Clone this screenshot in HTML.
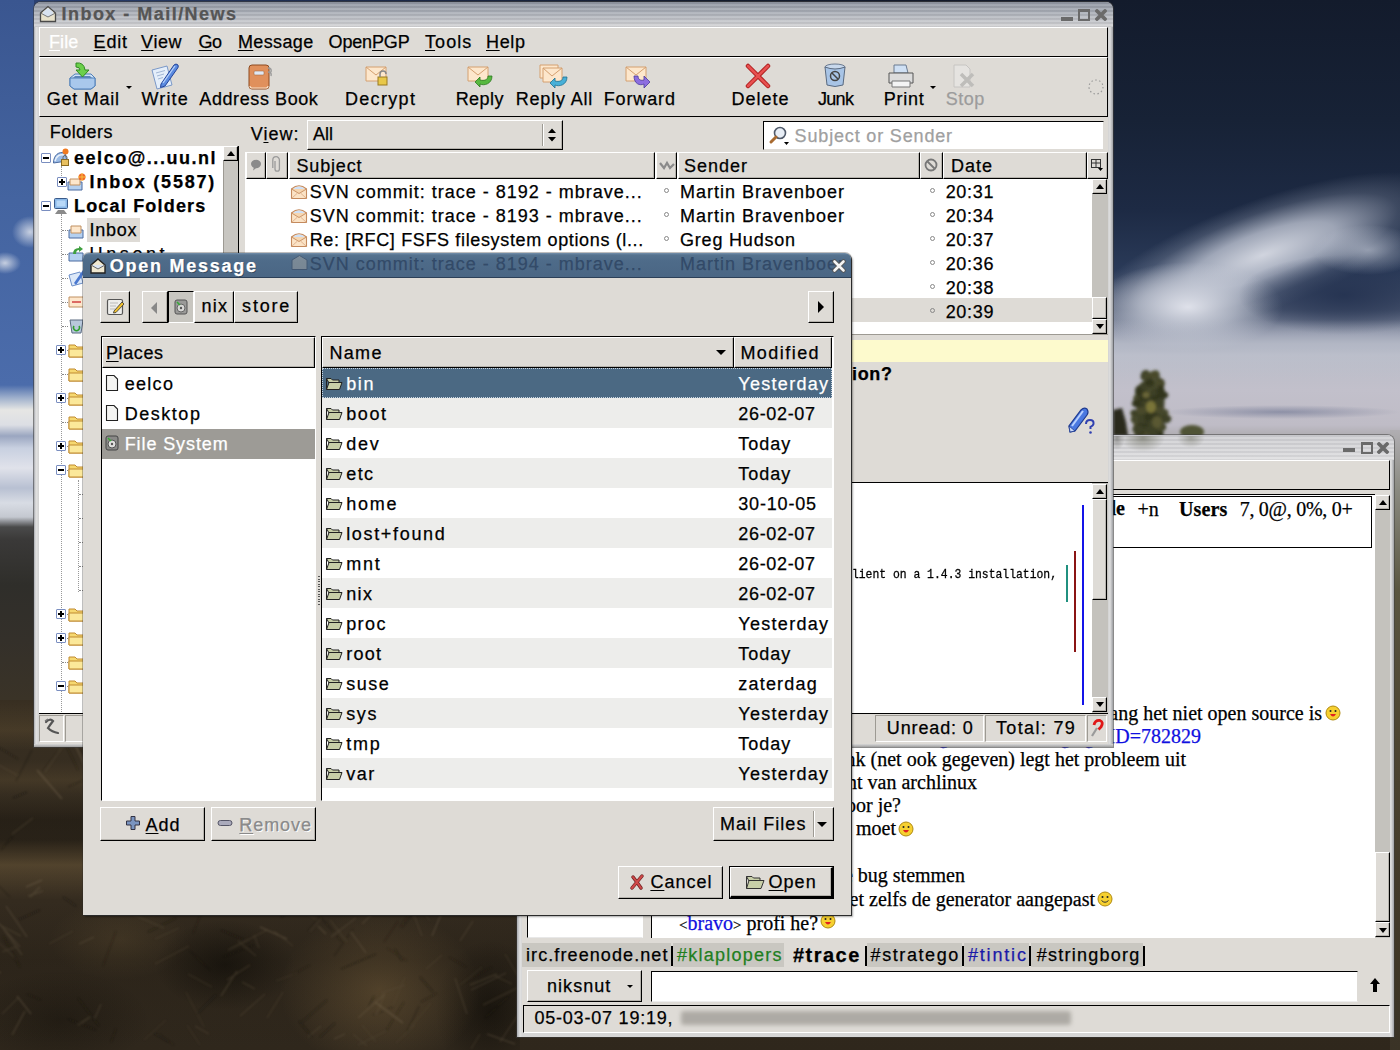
<!DOCTYPE html>
<html><head><meta charset="utf-8">
<style>
*{margin:0;padding:0;box-sizing:border-box}
html,body{width:1400px;height:1050px;overflow:hidden}
body{position:relative;font-family:"Liberation Sans",sans-serif;font-size:18px;letter-spacing:.6px;color:#000;background:#2a2a22}
.a{position:absolute}
.gtk{background:#dedbd6}
.btn{background:#dedbd6;border-top:1px solid #fff;border-left:1px solid #fff;border-right:1px solid #000;border-bottom:1px solid #000;box-shadow:inset -1px -1px 0 #b5b2ac}
.sunk{border-top:1px solid #000;border-left:1px solid #000;border-right:1px solid #fff;border-bottom:1px solid #fff}
.t{position:absolute;white-space:nowrap;line-height:20px;-webkit-text-stroke:0.25px currentColor}
.b{font-weight:bold}
.u{text-decoration:underline;text-underline-offset:2px;text-decoration-thickness:1px}
.title{background:repeating-linear-gradient(180deg,rgba(0,0,0,.05) 0px,rgba(0,0,0,.05) 2px,rgba(255,255,255,.1) 2px,rgba(255,255,255,.1) 4px),linear-gradient(180deg,#9096a2 0,#a6abb4 35%,#c0c2c8 70%,#d4d4d6 100%)}
.sr{font-family:"Liberation Serif",serif;font-size:18px;letter-spacing:0}
</style></head><body>
<!-- BACKGROUND -->
<div class="a" style="left:0;top:0;width:1400px;height:1050px;background:linear-gradient(180deg,#1a2438 0px,#1a2438 440px,#3e3a2c 470px,#3a3327 560px,#372e21 700px,#342b1f 900px,#2f271c 1050px)"></div>
<div class="a" style="left:0;top:0;width:1400px;height:8px;background:linear-gradient(90deg,#2c4478 0,#22335a 200px,#141c2e 700px,#111827 1400px)"></div>
<div class="a" style="left:1113px;top:0;width:287px;height:440px;overflow:hidden;background:linear-gradient(180deg,#131b2c 0px,#172236 120px,#1d2a44 210px,#2a3a58 270px,#4a5670 310px,#8d94a8 335px,#b9bcc8 355px,#c2c0cb 390px,#bfbcc6 425px,#a8a6a8 440px)">
 <div class="a" style="left:-40px;top:200px;width:380px;height:110px;transform:rotate(-20deg);background:radial-gradient(ellipse 50% 50% at 50% 50%,rgba(218,221,230,.95) 0%,rgba(200,205,218,.75) 40%,rgba(160,168,185,.25) 75%,rgba(150,160,180,0) 100%)"></div>
 <div class="a" style="left:-20px;top:262px;width:190px;height:90px;background:radial-gradient(ellipse 50% 50% at 50% 50%,rgba(228,230,238,.95) 0%,rgba(205,209,220,.65) 50%,rgba(180,186,200,0) 100%)"></div>
 <div class="a" style="left:115px;top:255px;width:210px;height:80px;background:radial-gradient(ellipse 50% 50% at 55% 50%,rgba(36,50,80,.9) 0%,rgba(36,50,80,.5) 50%,rgba(36,50,80,0) 100%)"></div>
 <div class="a" style="left:200px;top:225px;width:110px;height:50px;background:radial-gradient(ellipse 50% 50% at 50% 50%,rgba(205,210,222,.6) 0%,rgba(205,210,222,0) 100%)"></div>
 <div class="a" style="left:0px;top:320px;width:287px;height:60px;background:linear-gradient(180deg,rgba(190,194,206,0),rgba(190,194,206,.6) 40%,rgba(190,194,206,0))"></div>
 <svg class="a" style="left:0px;top:360px" width="120" height="80" viewBox="0 0 120 80"><defs><filter id="bl" x="-30%" y="-30%" width="160%" height="160%"><feGaussianBlur stdDeviation="1.6"/></filter></defs><g filter="url(#bl)"><path d="M22 30 Q37 8 52 30 L50 76 L26 76Z" fill="#3e4026"/><ellipse cx="45.1" cy="52.6" rx="5.4" ry="4.9" fill="#3c3f25"/><ellipse cx="45.5" cy="66.1" rx="3.7" ry="3.1" fill="#45472a"/><ellipse cx="36.4" cy="21.0" rx="3.7" ry="4.1" fill="#45472a"/><ellipse cx="33.4" cy="14.8" rx="3.8" ry="4.8" fill="#4a4a2c"/><ellipse cx="43.4" cy="23.9" rx="3.4" ry="4.2" fill="#45472a"/><ellipse cx="46.4" cy="22.2" rx="3.0" ry="4.5" fill="#45472a"/><ellipse cx="30.6" cy="68.1" rx="5.9" ry="4.1" fill="#45472a"/><ellipse cx="47.7" cy="25.3" rx="3.6" ry="4.9" fill="#4a4a2c"/><ellipse cx="32.8" cy="32.5" rx="3.5" ry="3.3" fill="#3c3f25"/><ellipse cx="47.1" cy="34.6" rx="4.8" ry="4.2" fill="#33361f"/><ellipse cx="34.7" cy="18.1" rx="3.9" ry="4.4" fill="#45472a"/><ellipse cx="44.2" cy="43.8" rx="3.2" ry="5.0" fill="#3c3f25"/><ellipse cx="32.8" cy="72.9" rx="4.2" ry="4.1" fill="#4a4a2c"/><ellipse cx="39.7" cy="36.7" rx="3.0" ry="3.1" fill="#45472a"/><ellipse cx="52.1" cy="52.7" rx="3.4" ry="3.5" fill="#4a4a2c"/><ellipse cx="32.3" cy="35.4" rx="4.6" ry="4.6" fill="#3c3f25"/><ellipse cx="46.5" cy="50.6" rx="4.1" ry="3.6" fill="#4a4a2c"/><ellipse cx="25.0" cy="72.6" rx="4.0" ry="4.2" fill="#45472a"/><ellipse cx="50.7" cy="35.1" rx="4.6" ry="3.6" fill="#33361f"/><ellipse cx="46.1" cy="33.0" rx="4.9" ry="4.4" fill="#33361f"/><ellipse cx="27.2" cy="75.8" rx="3.1" ry="5.0" fill="#4a4a2c"/><ellipse cx="40.3" cy="16.0" rx="4.0" ry="3.5" fill="#4a4a2c"/><ellipse cx="46.9" cy="23.0" rx="4.9" ry="4.6" fill="#33361f"/><ellipse cx="25.6" cy="66.0" rx="5.2" ry="4.9" fill="#4a4a2c"/><ellipse cx="35.8" cy="20.6" rx="3.4" ry="4.7" fill="#33361f"/><ellipse cx="45.6" cy="22.8" rx="4.9" ry="3.3" fill="#4a4a2c"/><ellipse cx="42.5" cy="73.5" rx="4.0" ry="3.5" fill="#4a4a2c"/><ellipse cx="24.3" cy="39.0" rx="4.1" ry="5.0" fill="#45472a"/><ellipse cx="37.0" cy="52.9" rx="4.0" ry="3.2" fill="#33361f"/><ellipse cx="38.7" cy="45.9" rx="4.5" ry="3.1" fill="#33361f"/><ellipse cx="42.3" cy="57.1" rx="5.3" ry="3.7" fill="#33361f"/><ellipse cx="29.8" cy="65.8" rx="5.9" ry="4.4" fill="#33361f"/><ellipse cx="39.7" cy="54.3" rx="3.0" ry="4.1" fill="#33361f"/><ellipse cx="29.9" cy="34.2" rx="3.9" ry="4.0" fill="#33361f"/><ellipse cx="41.7" cy="35.6" rx="5.2" ry="4.7" fill="#33361f"/><ellipse cx="27.3" cy="71.2" rx="5.6" ry="3.9" fill="#33361f"/><ellipse cx="37.5" cy="73.3" rx="4.6" ry="3.3" fill="#33361f"/><ellipse cx="36.3" cy="72.1" rx="5.1" ry="4.4" fill="#4a4a2c"/><ellipse cx="43.3" cy="24.7" rx="4.7" ry="4.3" fill="#4a4a2c"/><ellipse cx="38.6" cy="32.8" rx="5.6" ry="3.5" fill="#3c3f25"/><ellipse cx="39.1" cy="26.1" rx="4.9" ry="3.4" fill="#45472a"/><ellipse cx="21.8" cy="53.1" rx="4.4" ry="3.5" fill="#3c3f25"/><ellipse cx="25.3" cy="69.3" rx="5.9" ry="4.0" fill="#3c3f25"/><ellipse cx="31.7" cy="39.8" rx="5.0" ry="3.1" fill="#45472a"/><ellipse cx="47.6" cy="28.7" rx="3.0" ry="3.8" fill="#33361f"/><ellipse cx="48.2" cy="67.1" rx="5.1" ry="4.1" fill="#3c3f25"/><ellipse cx="30.2" cy="48.1" rx="3.9" ry="4.0" fill="#33361f"/><ellipse cx="46.3" cy="73.4" rx="4.3" ry="4.6" fill="#33361f"/><ellipse cx="24.9" cy="43.0" rx="4.1" ry="4.0" fill="#45472a"/><ellipse cx="40.2" cy="74.0" rx="4.1" ry="4.8" fill="#3c3f25"/><ellipse cx="30.9" cy="37.7" rx="5.7" ry="4.1" fill="#33361f"/><ellipse cx="50.0" cy="53.0" rx="4.1" ry="3.9" fill="#45472a"/><ellipse cx="36.3" cy="44.6" rx="5.1" ry="3.8" fill="#45472a"/><ellipse cx="28.9" cy="50.9" rx="5.9" ry="4.0" fill="#4a4a2c"/><ellipse cx="42.9" cy="15.2" rx="3.9" ry="4.9" fill="#45472a"/><ellipse cx="23.7" cy="43.6" rx="4.9" ry="3.9" fill="#33361f"/><ellipse cx="31.8" cy="16.5" rx="4.2" ry="4.0" fill="#33361f"/><ellipse cx="36.3" cy="29.1" rx="3.1" ry="4.0" fill="#45472a"/><ellipse cx="30.1" cy="58.7" rx="4.5" ry="5.0" fill="#3c3f25"/><ellipse cx="32.1" cy="15.0" rx="3.8" ry="4.4" fill="#33361f"/><ellipse cx="21.8" cy="59.3" rx="4.0" ry="4.4" fill="#45472a"/><ellipse cx="33.5" cy="16.3" rx="4.4" ry="4.8" fill="#45472a"/><ellipse cx="40.6" cy="14.9" rx="4.3" ry="4.2" fill="#4a4a2c"/><ellipse cx="47.4" cy="67.2" rx="4.4" ry="4.4" fill="#45472a"/><ellipse cx="36.0" cy="69.7" rx="5.3" ry="3.6" fill="#3c3f25"/><ellipse cx="34.8" cy="57.1" rx="3.9" ry="4.6" fill="#33361f"/><ellipse cx="36.6" cy="22.8" rx="4.6" ry="4.0" fill="#33361f"/><ellipse cx="34.4" cy="47.4" rx="4.6" ry="3.1" fill="#45472a"/><ellipse cx="25.4" cy="30.6" rx="3.2" ry="4.9" fill="#33361f"/><ellipse cx="52.4" cy="58.8" rx="6.0" ry="4.4" fill="#3c3f25"/><ellipse cx="38" cy="47" rx="5" ry="6" fill="#7a7438"/><ellipse cx="33" cy="35" rx="3.5" ry="3" fill="#6a6638"/><ellipse cx="44" cy="62" rx="5" ry="6" fill="#5a5830"/><ellipse cx="79" cy="72" rx="12" ry="7" fill="#505234"/><path d="M0 50 L9 48 L13 62 L15 76 L0 76Z" fill="#2a2c1e"/></g></svg>
 <div class="a" style="left:50px;top:405px;width:237px;height:14px;background:radial-gradient(ellipse 50% 50% at 50% 50%,rgba(80,90,125,.45) 0%,rgba(80,90,125,0) 100%)"></div>
</div>
<div class="a" style="left:0;top:0;width:34px;height:700px;background:linear-gradient(180deg,#3a5690 0px,#4464a0 200px,#4b6cab 385px,#9fb0cc 398px,#e6e6e4 410px,#dcdee4 425px,#9aa6c0 436px,#c8d0e0 448px,#e0e2ea 468px,#b8c0d2 488px,#d8dce4 503px,#c4c8d0 517px,#4a4a4a 527px,#3a3938 540px,#2f2e2a 585px,#34302a 640px,#3a3327 700px)"></div>
<div class="a" style="left:0;top:215px;width:34px;height:70px;background:radial-gradient(ellipse 18px 16px at 30px 17px,rgba(220,225,235,.85),rgba(220,225,235,0)),radial-gradient(ellipse 16px 11px at 5px 48px,rgba(220,225,235,.85),rgba(220,225,235,0))"></div>
<div class="a" style="left:0;top:700px;width:520px;height:350px;background:
 linear-gradient(180deg,rgba(0,0,0,0) 0px,rgba(100,82,52,.35) 30px,rgba(0,0,0,0) 50px,rgba(0,0,0,0) 60px,rgba(100,82,52,.3) 80px,rgba(0,0,0,0) 95px,rgba(12,10,6,.35) 120px,rgba(12,10,6,.3) 140px,rgba(110,90,58,.5) 165px,rgba(0,0,0,0) 200px,rgba(12,10,6,.15) 260px,rgba(0,0,0,0) 350px),
 radial-gradient(ellipse 100px 80px at 380px 290px,rgba(120,96,60,.55),rgba(120,96,60,0)),
 radial-gradient(ellipse 70px 45px at 225px 265px,rgba(12,10,6,.6),rgba(12,10,6,0)),
 radial-gradient(ellipse 55px 70px at 490px 310px,rgba(12,10,6,.6),rgba(12,10,6,0)),
 radial-gradient(ellipse 90px 50px at 60px 320px,rgba(12,10,6,.35),rgba(12,10,6,0)),
 radial-gradient(ellipse 70px 40px at 120px 240px,rgba(100,82,52,.35),rgba(100,82,52,0))"></div>
<svg class="a" style="left:0;top:740px" width="520" height="310" viewBox="0 0 520 310" opacity=".45"><defs><filter id="gb"><feGaussianBlur stdDeviation="0.9"/></filter></defs><g filter="url(#gb)">
<path d="M168 47 L144 36" stroke="#807058" stroke-width="1.2"/>
<path d="M30 157 L40 147" stroke="#6e6048" stroke-width="1.2"/>
<path d="M221 256 L237 231" stroke="#6e6048" stroke-width="1.2"/>
<path d="M304 15 L317 5" stroke="#1a1710" stroke-width="0.8"/>
<path d="M281 177 L294 169" stroke="#151410" stroke-width="1.2"/>
<path d="M98 30 L78 8" stroke="#1a1710" stroke-width="1.2"/>
<path d="M276 241 L297 233" stroke="#5a4e3a" stroke-width="0.8"/>
<path d="M363 76 L391 51" stroke="#1a1710" stroke-width="1"/>
<path d="M317 23 L327 4" stroke="#1a1710" stroke-width="1"/>
<path d="M20 207 L-4 180" stroke="#807058" stroke-width="1"/>
<path d="M362 184 L387 159" stroke="#807058" stroke-width="1"/>
<path d="M362 20 L340 4" stroke="#1a1710" stroke-width="1"/>
<path d="M373 275 L393 267" stroke="#151410" stroke-width="0.8"/>
<path d="M257 68 L277 56" stroke="#1a1710" stroke-width="0.8"/>
<path d="M87 125 L98 103" stroke="#151410" stroke-width="1"/>
<path d="M367 306 L353 294" stroke="#6e6048" stroke-width="0.8"/>
<path d="M79 204 L94 197" stroke="#807058" stroke-width="0.8"/>
<path d="M76 166 L63 157" stroke="#151410" stroke-width="1.2"/>
<path d="M341 229 L376 214" stroke="#151410" stroke-width="1"/>
<path d="M207 122 L219 109" stroke="#5a4e3a" stroke-width="1"/>
<path d="M84 105 L90 90" stroke="#6e6048" stroke-width="1"/>
<path d="M319 22 L339 -1" stroke="#807058" stroke-width="1.2"/>
<path d="M189 38 L181 14" stroke="#1a1710" stroke-width="1"/>
<path d="M45 32 L65 3" stroke="#5a4e3a" stroke-width="1.2"/>
<path d="M12 295 L25 271" stroke="#6e6048" stroke-width="1.2"/>
<path d="M155 199 L179 188" stroke="#5a4e3a" stroke-width="1"/>
<path d="M401 165 L387 154" stroke="#5a4e3a" stroke-width="0.8"/>
<path d="M426 229 L442 215" stroke="#6e6048" stroke-width="0.8"/>
<path d="M411 146 L428 133" stroke="#807058" stroke-width="1"/>
<path d="M42 32 L58 12" stroke="#151410" stroke-width="0.8"/>
<path d="M249 202 L221 190" stroke="#1a1710" stroke-width="1.2"/>
<path d="M390 148 L409 138" stroke="#1a1710" stroke-width="1"/>
<path d="M209 294 L195 286" stroke="#5a4e3a" stroke-width="1.2"/>
<path d="M471 250 L506 233" stroke="#807058" stroke-width="0.8"/>
<path d="M285 41 L314 31" stroke="#151410" stroke-width="1.2"/>
<path d="M485 134 L477 119" stroke="#807058" stroke-width="0.8"/>
<path d="M152 75 L166 55" stroke="#5a4e3a" stroke-width="0.8"/>
<path d="M473 110 L502 86" stroke="#1a1710" stroke-width="1.2"/>
<path d="M68 47 L99 33" stroke="#151410" stroke-width="0.8"/>
<path d="M404 46 L416 37" stroke="#6e6048" stroke-width="1"/>
<path d="M355 165 L387 147" stroke="#6e6048" stroke-width="0.8"/>
<path d="M99 13 L108 4" stroke="#6e6048" stroke-width="1"/>
<path d="M169 302 L152 292" stroke="#151410" stroke-width="1.2"/>
<path d="M420 157 L447 133" stroke="#807058" stroke-width="1.2"/>
<path d="M464 63 L480 46" stroke="#807058" stroke-width="0.8"/>
<path d="M349 133 L358 120" stroke="#5a4e3a" stroke-width="1.2"/>
<path d="M335 114 L347 91" stroke="#6e6048" stroke-width="1"/>
<path d="M460 50 L433 34" stroke="#151410" stroke-width="1"/>
<path d="M176 61 L187 54" stroke="#151410" stroke-width="1"/>
<path d="M229 6 L250 -10" stroke="#6e6048" stroke-width="0.8"/>
<path d="M512 244 L495 236" stroke="#6e6048" stroke-width="0.8"/>
<path d="M141 40 L173 27" stroke="#807058" stroke-width="1"/>
<path d="M78 285 L90 277" stroke="#6e6048" stroke-width="1.2"/>
<path d="M95 278 L101 264" stroke="#807058" stroke-width="0.8"/>
<path d="M316 69 L322 58" stroke="#151410" stroke-width="1"/>
<path d="M482 83 L496 71" stroke="#6e6048" stroke-width="0.8"/>
<path d="M136 56 L120 35" stroke="#5a4e3a" stroke-width="1"/>
<path d="M232 208 L267 190" stroke="#6e6048" stroke-width="0.8"/>
<path d="M10 157 L-4 143" stroke="#1a1710" stroke-width="0.8"/>
<path d="M342 202 L318 174" stroke="#151410" stroke-width="1"/>
<path d="M358 305 L386 291" stroke="#5a4e3a" stroke-width="1"/>
<path d="M515 304 L487 294" stroke="#807058" stroke-width="1"/>
<path d="M85 26 L72 -2" stroke="#807058" stroke-width="1.2"/>
<path d="M126 91 L138 70" stroke="#807058" stroke-width="1"/>
<path d="M500 302 L522 269" stroke="#807058" stroke-width="0.8"/>
<path d="M185 0 L204 -18" stroke="#5a4e3a" stroke-width="0.8"/>
<path d="M262 2 L273 -19" stroke="#6e6048" stroke-width="1"/>
<path d="M12 94 L33 78" stroke="#5a4e3a" stroke-width="1.2"/>
<path d="M464 243 L492 227" stroke="#1a1710" stroke-width="0.8"/>
<path d="M148 192 L176 178" stroke="#151410" stroke-width="1.2"/>
<path d="M223 217 L254 205" stroke="#151410" stroke-width="0.8"/>
<path d="M430 181 L412 155" stroke="#5a4e3a" stroke-width="0.8"/>
<path d="M16 41 L32 10" stroke="#151410" stroke-width="0.8"/>
<path d="M326 194 L318 186" stroke="#6e6048" stroke-width="1.2"/>
<path d="M485 278 L509 256" stroke="#1a1710" stroke-width="1"/>
<path d="M421 262 L437 253" stroke="#1a1710" stroke-width="1"/>
<path d="M440 24 L429 16" stroke="#5a4e3a" stroke-width="0.8"/>
<path d="M312 103 L295 79" stroke="#5a4e3a" stroke-width="0.8"/>
<path d="M251 151 L234 143" stroke="#1a1710" stroke-width="1"/>
<path d="M369 89 L403 69" stroke="#151410" stroke-width="0.8"/>
<path d="M162 27 L170 15" stroke="#151410" stroke-width="1"/>
<path d="M517 120 L511 107" stroke="#6e6048" stroke-width="0.8"/>
<path d="M389 81 L412 63" stroke="#807058" stroke-width="0.8"/>
<path d="M366 72 L357 63" stroke="#6e6048" stroke-width="1"/>
<path d="M354 126 L337 111" stroke="#6e6048" stroke-width="1"/>
<path d="M1 233 L-33 216" stroke="#6e6048" stroke-width="1.2"/>
<path d="M151 115 L178 107" stroke="#807058" stroke-width="1"/>
<path d="M393 265 L405 237" stroke="#5a4e3a" stroke-width="0.8"/>
<path d="M505 135 L535 119" stroke="#1a1710" stroke-width="0.8"/>
<path d="M422 196 L412 170" stroke="#6e6048" stroke-width="0.8"/>
<path d="M485 127 L453 111" stroke="#1a1710" stroke-width="0.8"/>
<path d="M474 171 L488 156" stroke="#807058" stroke-width="1.2"/>
<path d="M384 202 L398 181" stroke="#1a1710" stroke-width="0.8"/>
<path d="M87 50 L111 40" stroke="#5a4e3a" stroke-width="1"/>
<path d="M471 309 L480 294" stroke="#6e6048" stroke-width="0.8"/>
<path d="M178 28 L194 5" stroke="#6e6048" stroke-width="1.2"/>
<path d="M453 119 L436 109" stroke="#6e6048" stroke-width="1"/>
<path d="M144 300 L166 280" stroke="#5a4e3a" stroke-width="0.8"/>
<path d="M141 77 L168 49" stroke="#6e6048" stroke-width="0.8"/>
<path d="M17 220 L-4 200" stroke="#6e6048" stroke-width="0.8"/>
<path d="M204 287 L186 252" stroke="#5a4e3a" stroke-width="0.8"/>
<path d="M116 47 L85 32" stroke="#1a1710" stroke-width="0.8"/>
<path d="M287 12 L255 -8" stroke="#807058" stroke-width="0.8"/>
<path d="M326 164 L339 157" stroke="#807058" stroke-width="1.2"/>
<path d="M491 59 L501 54" stroke="#151410" stroke-width="1"/>
<path d="M518 86 L535 78" stroke="#151410" stroke-width="0.8"/>
<path d="M284 9 L296 1" stroke="#5a4e3a" stroke-width="1"/>
<path d="M460 201 L473 181" stroke="#807058" stroke-width="0.8"/>
<path d="M256 216 L238 201" stroke="#6e6048" stroke-width="1"/>
<path d="M384 157 L404 150" stroke="#5a4e3a" stroke-width="0.8"/>
<path d="M242 82 L215 70" stroke="#151410" stroke-width="0.8"/>
<path d="M466 150 L440 139" stroke="#1a1710" stroke-width="0.8"/>
<path d="M111 302 L116 289" stroke="#1a1710" stroke-width="1"/>
<path d="M467 274 L455 238" stroke="#807058" stroke-width="0.8"/>
<path d="M96 290 L68 279" stroke="#1a1710" stroke-width="1"/>
<path d="M512 137 L518 124" stroke="#1a1710" stroke-width="0.8"/>
<path d="M292 235 L310 225" stroke="#1a1710" stroke-width="0.8"/>
<path d="M26 147 L42 140" stroke="#807058" stroke-width="1.2"/>
<path d="M466 9 L496 -6" stroke="#6e6048" stroke-width="1"/>
<path d="M18 19 L-10 2" stroke="#151410" stroke-width="1"/>
<path d="M189 104 L158 92" stroke="#807058" stroke-width="1"/>
<path d="M155 224 L189 206" stroke="#6e6048" stroke-width="0.8"/>
<path d="M430 33 L405 10" stroke="#807058" stroke-width="1"/>
<path d="M424 41 L438 6" stroke="#807058" stroke-width="1.2"/>
<path d="M402 188 L415 171" stroke="#151410" stroke-width="0.8"/>
<path d="M266 121 L286 99" stroke="#1a1710" stroke-width="1.2"/>
<path d="M283 50 L289 37" stroke="#151410" stroke-width="0.8"/>
<path d="M108 131 L102 115" stroke="#5a4e3a" stroke-width="1"/>
<path d="M240 276 L265 254" stroke="#6e6048" stroke-width="1"/>
<path d="M153 176 L168 167" stroke="#5a4e3a" stroke-width="0.8"/>
<path d="M128 48 L114 31" stroke="#1a1710" stroke-width="1"/>
<path d="M516 157 L543 143" stroke="#6e6048" stroke-width="0.8"/>
<path d="M2 274 L18 258" stroke="#807058" stroke-width="0.8"/>
<path d="M62 59 L37 30" stroke="#807058" stroke-width="1.2"/>
<path d="M450 139 L484 121" stroke="#6e6048" stroke-width="1.2"/>
<path d="M310 192 L320 180" stroke="#5a4e3a" stroke-width="1"/>
<path d="M20 227 L3 196" stroke="#1a1710" stroke-width="1.2"/>
<path d="M193 193 L203 169" stroke="#1a1710" stroke-width="0.8"/>
<path d="M212 247 L188 234" stroke="#5a4e3a" stroke-width="1"/>
<path d="M362 127 L385 96" stroke="#807058" stroke-width="1.2"/>
<path d="M295 111 L331 94" stroke="#807058" stroke-width="1.2"/>
<path d="M103 226 L116 191" stroke="#1a1710" stroke-width="0.8"/>
<path d="M427 126 L415 115" stroke="#6e6048" stroke-width="0.8"/>
<path d="M287 199 L260 187" stroke="#807058" stroke-width="1.2"/>
<path d="M262 45 L291 20" stroke="#6e6048" stroke-width="1"/>
<path d="M255 249 L242 242" stroke="#6e6048" stroke-width="1"/>
<path d="M164 188 L134 175" stroke="#5a4e3a" stroke-width="1.2"/>
<path d="M409 69 L441 54" stroke="#5a4e3a" stroke-width="1.2"/>
<path d="M113 124 L124 112" stroke="#5a4e3a" stroke-width="1.2"/>
<path d="M424 60 L410 32" stroke="#807058" stroke-width="0.8"/>
<path d="M203 141 L187 115" stroke="#807058" stroke-width="1.2"/>
<path d="M130 121 L142 109" stroke="#6e6048" stroke-width="1.2"/>
<path d="M513 144 L541 123" stroke="#5a4e3a" stroke-width="1"/>
<path d="M208 21 L230 -6" stroke="#151410" stroke-width="1.2"/>
<path d="M342 13 L361 5" stroke="#151410" stroke-width="0.8"/>
<path d="M28 156 L43 151" stroke="#6e6048" stroke-width="1.2"/>
<path d="M381 253 L405 245" stroke="#5a4e3a" stroke-width="1.2"/>
<path d="M410 288 L431 263" stroke="#5a4e3a" stroke-width="1"/>
<path d="M466 85 L443 73" stroke="#1a1710" stroke-width="0.8"/>
<path d="M308 191 L319 178" stroke="#1a1710" stroke-width="0.8"/>
<path d="M331 86 L353 60" stroke="#807058" stroke-width="0.8"/>
<path d="M399 15 L391 -8" stroke="#151410" stroke-width="1.2"/>
<path d="M358 278 L385 254" stroke="#807058" stroke-width="1"/>
<path d="M195 114 L204 103" stroke="#5a4e3a" stroke-width="0.8"/>
<path d="M320 297 L335 283" stroke="#151410" stroke-width="1.2"/>
<path d="M466 227 L449 217" stroke="#1a1710" stroke-width="1"/>
<path d="M267 278 L283 252" stroke="#6e6048" stroke-width="0.8"/>
<path d="M1 110 L13 96" stroke="#151410" stroke-width="1"/>
<path d="M306 63 L295 52" stroke="#5a4e3a" stroke-width="1.2"/>
<path d="M78 30 L63 -1" stroke="#1a1710" stroke-width="1"/>
<path d="M503 17 L491 -9" stroke="#151410" stroke-width="1"/>
<path d="M313 160 L319 150" stroke="#6e6048" stroke-width="1.2"/>
<path d="M13 58 L27 52" stroke="#151410" stroke-width="1.2"/>
<path d="M342 61 L364 41" stroke="#1a1710" stroke-width="1.2"/>
<path d="M91 96 L106 62" stroke="#1a1710" stroke-width="1.2"/>
<path d="M280 116 L293 111" stroke="#1a1710" stroke-width="0.8"/>
<path d="M117 33 L126 13" stroke="#807058" stroke-width="1.2"/>
<path d="M27 197 L6 166" stroke="#807058" stroke-width="1"/>
<path d="M334 299 L345 294" stroke="#807058" stroke-width="0.8"/>
<path d="M438 63 L454 56" stroke="#1a1710" stroke-width="1"/>
<path d="M313 118 L297 81" stroke="#151410" stroke-width="1"/>
<path d="M246 164 L260 129" stroke="#5a4e3a" stroke-width="1.2"/>
<path d="M460 245 L482 227" stroke="#5a4e3a" stroke-width="0.8"/>
<path d="M17 35 L-18 16" stroke="#6e6048" stroke-width="0.8"/>
<path d="M22 215 L3 188" stroke="#6e6048" stroke-width="1.2"/>
<path d="M396 62 L375 39" stroke="#1a1710" stroke-width="0.8"/>
<path d="M128 63 L164 50" stroke="#6e6048" stroke-width="1.2"/>
<path d="M329 148 L355 134" stroke="#807058" stroke-width="1"/>
<path d="M175 81 L187 76" stroke="#807058" stroke-width="1"/>
<path d="M400 187 L419 160" stroke="#1a1710" stroke-width="0.8"/>
<path d="M227 240 L250 225" stroke="#5a4e3a" stroke-width="1.2"/>
<path d="M448 28 L438 22" stroke="#5a4e3a" stroke-width="1"/>
<path d="M396 303 L415 285" stroke="#5a4e3a" stroke-width="1"/>
<path d="M308 297 L321 286" stroke="#5a4e3a" stroke-width="1.2"/>
<path d="M120 51 L107 29" stroke="#151410" stroke-width="0.8"/>
<path d="M327 110 L351 83" stroke="#6e6048" stroke-width="1"/>
<path d="M462 8 L483 -23" stroke="#151410" stroke-width="0.8"/>
<path d="M197 274 L216 255" stroke="#151410" stroke-width="1.2"/>
<path d="M18 180 L40 170" stroke="#151410" stroke-width="1.2"/>
<path d="M168 144 L153 134" stroke="#807058" stroke-width="1"/>
<path d="M334 216 L353 189" stroke="#151410" stroke-width="0.8"/>
<path d="M376 302 L362 285" stroke="#5a4e3a" stroke-width="1"/>
<path d="M497 80 L492 65" stroke="#6e6048" stroke-width="0.8"/>
<path d="M200 305 L187 285" stroke="#5a4e3a" stroke-width="0.8"/>
<path d="M332 33 L340 23" stroke="#1a1710" stroke-width="1"/>
<path d="M361 155 L349 144" stroke="#151410" stroke-width="1.2"/>
<path d="M210 230 L190 211" stroke="#1a1710" stroke-width="0.8"/>
<path d="M347 202 L330 180" stroke="#5a4e3a" stroke-width="1.2"/>
<path d="M94 39 L112 12" stroke="#1a1710" stroke-width="0.8"/>
<path d="M407 221 L387 208" stroke="#1a1710" stroke-width="0.8"/>
<path d="M323 127 L317 111" stroke="#807058" stroke-width="0.8"/>
<path d="M202 152 L177 142" stroke="#5a4e3a" stroke-width="1.2"/>
<path d="M407 292 L419 266" stroke="#151410" stroke-width="0.8"/>
<path d="M373 159 L361 135" stroke="#1a1710" stroke-width="1.2"/>
<path d="M493 65 L467 44" stroke="#6e6048" stroke-width="1.2"/>
<path d="M512 110 L525 91" stroke="#6e6048" stroke-width="0.8"/>
<path d="M218 130 L202 118" stroke="#5a4e3a" stroke-width="1"/>
<path d="M386 291 L404 262" stroke="#1a1710" stroke-width="1"/>
<path d="M110 40 L96 14" stroke="#1a1710" stroke-width="1.2"/>
<path d="M292 70 L269 52" stroke="#1a1710" stroke-width="1"/>
<path d="M518 236 L505 214" stroke="#5a4e3a" stroke-width="1"/>
<path d="M366 213 L351 192" stroke="#807058" stroke-width="1"/>
<path d="M127 94 L148 72" stroke="#807058" stroke-width="0.8"/>
<path d="M483 265 L517 248" stroke="#5a4e3a" stroke-width="1.2"/>
<path d="M432 196 L447 160" stroke="#807058" stroke-width="1"/>
<path d="M316 179 L295 167" stroke="#5a4e3a" stroke-width="0.8"/>
<path d="M470 245 L497 234" stroke="#6e6048" stroke-width="1.2"/>
<path d="M469 170 L448 155" stroke="#5a4e3a" stroke-width="1.2"/>
<path d="M41 260 L27 254" stroke="#1a1710" stroke-width="0.8"/>
<path d="M430 147 L457 121" stroke="#1a1710" stroke-width="0.8"/>
<path d="M259 167 L226 155" stroke="#1a1710" stroke-width="1.2"/>
<path d="M293 206 L274 191" stroke="#6e6048" stroke-width="0.8"/>
<path d="M331 197 L356 178" stroke="#807058" stroke-width="0.8"/>
<path d="M266 150 L236 139" stroke="#5a4e3a" stroke-width="1"/>
<path d="M49 204 L73 191" stroke="#5a4e3a" stroke-width="1"/>
<path d="M226 131 L244 122" stroke="#1a1710" stroke-width="1"/>
<path d="M174 305 L159 294" stroke="#1a1710" stroke-width="0.8"/>
<path d="M172 98 L195 80" stroke="#6e6048" stroke-width="1"/>
<path d="M376 275 L384 256" stroke="#6e6048" stroke-width="0.8"/>
<path d="M99 286 L78 258" stroke="#151410" stroke-width="1.2"/>
<path d="M196 46 L175 16" stroke="#6e6048" stroke-width="0.8"/>
<path d="M21 196 L-6 182" stroke="#6e6048" stroke-width="1"/>
<path d="M403 283 L375 262" stroke="#807058" stroke-width="1.2"/>
<path d="M369 267 L374 256" stroke="#151410" stroke-width="1.2"/>
<path d="M301 283 L327 260" stroke="#1a1710" stroke-width="1.2"/>
<path d="M362 125 L386 110" stroke="#5a4e3a" stroke-width="1"/>
<path d="M400 170 L427 144" stroke="#6e6048" stroke-width="1"/>
<path d="M2 212 L16 207" stroke="#6e6048" stroke-width="0.8"/>
<path d="M246 85 L269 62" stroke="#6e6048" stroke-width="1"/>
<path d="M402 221 L395 209" stroke="#151410" stroke-width="1.2"/>
<path d="M259 208 L254 195" stroke="#6e6048" stroke-width="0.8"/>
<path d="M31 274 L17 256" stroke="#807058" stroke-width="1.2"/>
<path d="M312 297 L299 281" stroke="#151410" stroke-width="1.2"/>
<path d="M228 210 L248 200" stroke="#5a4e3a" stroke-width="1.2"/>
<path d="M417 148 L403 135" stroke="#151410" stroke-width="1"/>
<path d="M152 19 L132 -10" stroke="#807058" stroke-width="1.2"/>
<path d="M377 5 L403 -8" stroke="#5a4e3a" stroke-width="1"/>
<path d="M201 117 L180 104" stroke="#6e6048" stroke-width="1"/>
<path d="M137 131 L170 114" stroke="#6e6048" stroke-width="1"/>
<path d="M433 252 L420 237" stroke="#151410" stroke-width="1.2"/>
</g></svg>
<div class="a" style="left:1390px;top:430px;width:10px;height:620px;background:linear-gradient(180deg,#b0aeb2 0px,#8a8a80 60px,#5a5640 160px,#4e4632 300px,#433b2a 450px,#3a3326 620px)"></div>
<!-- IRC WINDOW -->
<div class="a" style="left:517px;top:435px;width:877px;height:602px;border-radius:7px 7px 0 0;background:linear-gradient(90deg,#a9abb0 0,#e2e2e2 3px,#d6d6d6 5px,#d6d6d6 872px,#e0e0e0 874px,#9ea0a4 877px);box-shadow:0 0 0 1px rgba(60,60,60,.5)"></div>
<div class="a" style="left:517px;top:435px;width:877px;height:25px;border-radius:7px 7px 0 0;background:repeating-linear-gradient(180deg,rgba(200,200,204,.5) 0,rgba(200,200,204,.5) 2px,rgba(228,228,230,.5) 2px,rgba(228,228,230,.5) 4px),linear-gradient(180deg,#c4c4c8,#d6d6d8 70%,#e2e2e2)"></div>
<div class="a" style="left:1113px;top:436px;width:100px;height:16px;background:radial-gradient(ellipse 22px 14px at 30px 2px,rgba(70,72,50,.45),rgba(70,72,50,0)),radial-gradient(ellipse 14px 10px at 78px 2px,rgba(70,72,50,.35),rgba(70,72,50,0)),radial-gradient(ellipse 8px 12px at 4px 2px,rgba(50,50,40,.4),rgba(50,50,40,0))"></div>
<div class="a" style="left:1343px;top:448px;width:12px;height:4px;background:#6a6a6a"></div>
<div class="a" style="left:1361px;top:442px;width:12px;height:12px;border:2px solid #6a6a6a;border-top-width:3px"></div>
<svg class="a" style="left:1377px;top:442px" width="12" height="12" viewBox="0 0 12 12"><path d="M2 2 L10 10 M10 2 L2 10" stroke="#6a6a6a" stroke-width="3.8" stroke-linecap="round"/></svg>
<div class="a gtk" style="left:522px;top:460px;width:868px;height:30px;border-top:1px solid #fff;border-left:1px solid #fff;border-bottom:1px solid #000;border-right:1px solid #000"></div>
<div class="a gtk" style="left:522px;top:490px;width:868px;height:542px"></div>
<div class="a" style="left:651px;top:494px;width:724px;height:444px;background:#fff;border-top:1px solid #000;border-left:1px solid #000"></div>
<div class="a" style="left:655px;top:496px;width:717px;height:52px;border:1px solid #000;background:#fff"></div>
<div class="t sr b" style="right:275px;top:498px;font-size:20px">Mode</div>
<div class="t" style="left:1137.50px;top:498.75px;font-size:20px;letter-spacing:0.000px;font-family:'Liberation Serif',serif">+n</div>
<div class="t" style="left:1178.90px;top:498.75px;font-size:20px;letter-spacing:0.150px;font-family:'Liberation Serif',serif;font-weight:bold">Users</div>
<div class="t" style="left:1239.70px;top:498.75px;font-size:20px;letter-spacing:-0.275px;font-family:'Liberation Serif',serif">7, 0@, 0%, 0+</div>
<div class="a" style="left:1375px;top:495px;width:15px;height:443px;background:#c4c2bd"></div>
<div class="a btn" style="left:1375px;top:495px;width:15px;height:15px"></div>
<div class="a" style="left:1379px;top:500px;width:0;height:0;border-left:4px solid transparent;border-right:4px solid transparent;border-bottom:5px solid #000"></div>
<div class="a btn" style="left:1375px;top:852px;width:15px;height:70px"></div>
<div class="a btn" style="left:1375px;top:922px;width:15px;height:15px"></div>
<div class="a" style="left:1379px;top:928px;width:0;height:0;border-left:4px solid transparent;border-right:4px solid transparent;border-top:5px solid #000"></div>
<div class="a" style="left:527px;top:494px;width:116px;height:444px;background:#fff;border-top:1px solid #000;border-left:1px solid #000;border-right:1px solid #fff;border-bottom:1px solid #e8e8e8"></div>
<div class="t sr" style="right:78px;top:703px;font-size:20px;color:#000;text-align:right">&lt;bravo&gt; kan ik toch niet zeggen zolang het niet open source is</div>
<svg class="a" style="left:1325px;top:705px" width="16" height="16" viewBox="0 0 16 16"><circle cx="8" cy="8" r="7" fill="#f6d030" stroke="#b08a10" stroke-width="1"/><circle cx="5.5" cy="6" r="1" fill="#222"/><circle cx="10.5" cy="6" r="1" fill="#222"/><path d="M5 9 Q8 14 11 9" fill="#e02020"/></svg>
<div class="t sr" style="right:199px;top:726px;font-size:20px;color:#1010e0;text-align:right">bugzilla show_bug.cgi?ID=782829</div>
<div class="t sr" style="right:214px;top:749px;font-size:20px;color:#000;text-align:right">&lt;bravo&gt; de link (net ook gegeven) legt het probleem uit</div>
<div class="t sr" style="right:423px;top:772px;font-size:20px;color:#000;text-align:right">&lt;bravo&gt; het komt van archlinux</div>
<div class="t sr" style="right:499px;top:795px;font-size:20px;color:#000;text-align:right">&lt;niksnut&gt; voor je?</div>
<div class="t sr" style="right:504px;top:818px;font-size:20px;color:#000;text-align:right">&lt;bravo&gt; ik moet</div>
<svg class="a" style="left:898px;top:821px" width="16" height="16" viewBox="0 0 16 16"><circle cx="8" cy="8" r="7" fill="#f6d030" stroke="#b08a10" stroke-width="1"/><circle cx="5.5" cy="6" r="1" fill="#222"/><circle cx="10.5" cy="6" r="1" fill="#222"/><path d="M5 9 Q8 14 11 9" fill="#e02020"/></svg>
<div class="t sr" style="right:435px;top:865px;font-size:20px;color:#000;text-align:right">&lt;bravo&gt; op de bug stemmen</div>
<div class="t sr" style="right:305px;top:889px;font-size:20px;color:#000;text-align:right">&lt;bravo&gt; ik heb het zelfs de generator aangepast</div>
<svg class="a" style="left:1097px;top:891px" width="16" height="16" viewBox="0 0 16 16"><circle cx="8" cy="8" r="7" fill="#f6d030" stroke="#b08a10" stroke-width="1"/><circle cx="5.5" cy="6" r="1" fill="#222"/><circle cx="10.5" cy="6" r="1" fill="#222"/><path d="M4.5 9.5 Q8 13 11.5 9.5" fill="none" stroke="#333" stroke-width="1"/></svg>
<div class="t sr" style="left:679px;top:913px;font-size:20px"><span style="font-size:15px">&lt;</span><span style="color:#1010e0">bravo</span><span style="font-size:15px">&gt;</span> profi he?</div>
<svg class="a" style="left:820px;top:913px" width="16" height="16" viewBox="0 0 16 16"><circle cx="8" cy="8" r="7" fill="#f6d030" stroke="#b08a10" stroke-width="1"/><circle cx="5.5" cy="6" r="1" fill="#222"/><circle cx="10.5" cy="6" r="1" fill="#222"/><path d="M5 9 Q8 14 11 9" fill="#e02020"/></svg>
<div class="a" style="left:522px;top:943px;width:149px;height:24px;background:#c9c7c1"></div>
<div class="t" style="left:526.00px;top:944.86px;font-size:18px;letter-spacing:1.093px">irc.freenode.net</div>
<div class="a" style="left:671px;top:946px;width:2px;height:20px;background:#000"></div>
<div class="a" style="left:673px;top:943px;width:111px;height:24px;background:#c9c7c1"></div>
<div class="t" style="left:677.00px;top:944.86px;font-size:18px;letter-spacing:1.240px;color:#1f7f1f">#klaplopers</div>
<div class="t" style="left:792.90px;top:945.17px;font-size:20px;letter-spacing:1.500px;font-weight:bold">#trace</div>
<div class="a" style="left:865px;top:946px;width:2px;height:20px;background:#000"></div>
<div class="a" style="left:867px;top:943px;width:95px;height:24px;background:#c9c7c1"></div>
<div class="t" style="left:870.60px;top:944.86px;font-size:18px;letter-spacing:1.575px">#stratego</div>
<div class="a" style="left:962px;top:946px;width:2px;height:20px;background:#000"></div>
<div class="a" style="left:964px;top:943px;width:65px;height:24px;background:#c9c7c1"></div>
<div class="t" style="left:967.90px;top:944.86px;font-size:18px;letter-spacing:1.833px;color:#1a1aa8">#tintic</div>
<div class="a" style="left:1029px;top:946px;width:2px;height:20px;background:#000"></div>
<div class="a" style="left:1031px;top:943px;width:112px;height:24px;background:#c9c7c1"></div>
<div class="t" style="left:1036.80px;top:944.86px;font-size:18px;letter-spacing:1.250px">#stringborg</div>
<div class="a" style="left:1143px;top:946px;width:2px;height:20px;background:#000"></div>
<div class="a btn" style="left:527px;top:970px;width:115px;height:32px"></div>
<div class="t" style="left:547.00px;top:975.56px;font-size:18px;letter-spacing:1.050px">niksnut</div>
<div class="a" style="left:627px;top:985px;width:0;height:0;border-left:3px solid transparent;border-right:3px solid transparent;border-top:3px solid #000"></div>
<div class="a" style="left:651px;top:971px;width:707px;height:31px;background:#fff;border-top:1px solid #000;border-left:1px solid #000;border-right:1px solid #dedbd6;border-bottom:1px solid #eee"></div>
<svg class="a" style="left:1369px;top:977px" width="12" height="16" viewBox="0 0 12 16"><path d="M6 1 L11 7 H8 V15 H4 V7 H1Z" fill="#000"/></svg>
<div class="a" style="left:523px;top:1005px;width:867px;height:28px;border-top:1px solid #000;border-left:1px solid #000;border-right:1px solid #fff;border-bottom:1px solid #fff"></div>
<div class="t" style="left:534.40px;top:1007.66px;font-size:18px;letter-spacing:0.793px">05-03-07 19:19,</div>
<div class="a" style="left:681px;top:1011px;width:390px;height:14px;background:#a29f99;filter:blur(2px);border-radius:3px;opacity:.8"></div>
<!-- MAIL WINDOW -->
<div class="a" style="left:34px;top:2px;width:1079px;height:745px;border-radius:7px 7px 0 0;background:linear-gradient(90deg,#a9abb0 0,#e2e2e2 2px,#d2d2d2 5px,#d2d2d2 1074px,#dedede 1076px,#9ea0a4 1079px);box-shadow:0 0 0 1px rgba(60,60,60,.6)"></div>
<div class="a title" style="left:34px;top:2px;width:1079px;height:25px;border-radius:7px 7px 0 0"></div>
<div class="a" style="left:34px;top:744px;width:1079px;height:3px;background:linear-gradient(180deg,#d8d8d8,#a0a0a0)"></div>
<svg class="a" style="left:39px;top:5px" width="18" height="18" viewBox="0 0 18 18"><path d="M1.5 8 L9 1.5 L16.5 8 V16.5 H1.5 Z" fill="#e8e2cc" stroke="#4a4a4a" stroke-width="1.3"/><path d="M4 7 L9 3 L14 7 V10 L9 12 L4 10Z" fill="#d8e2f0"/><path d="M1.5 8 L9 12 L16.5 8" fill="none" stroke="#777"/></svg>
<div class="t" style="left:61.50px;top:4.26px;font-size:18px;letter-spacing:1.469px;font-weight:bold;color:#555">Inbox - Mail/News</div>
<div class="a" style="left:1061px;top:17px;width:12px;height:4px;background:#6a6a6a"></div>
<div class="a" style="left:1078px;top:9px;width:12px;height:12px;border:2px solid #6a6a6a;border-top-width:3px"></div>
<svg class="a" style="left:1095px;top:9px" width="12" height="12" viewBox="0 0 12 12"><path d="M2 2 L10 10 M10 2 L2 10" stroke="#6a6a6a" stroke-width="3.8" stroke-linecap="round"/></svg>
<div class="a gtk" style="left:39px;top:27px;width:1069px;height:30px;border-top:1px solid #fff;border-left:1px solid #fff;border-bottom:1px solid #000;border-right:1px solid #000"></div>
<div class="t" style="left:48.90px;top:31.86px;font-size:18px;letter-spacing:0.133px;color:#fff"><span class="u">F</span>ile</div>
<div class="t" style="left:93.60px;top:31.86px;font-size:18px;letter-spacing:0.767px"><span class="u">E</span>dit</div>
<div class="t" style="left:141.10px;top:31.86px;font-size:18px;letter-spacing:0.600px"><span class="u">V</span>iew</div>
<div class="t" style="left:198.60px;top:31.86px;font-size:18px;letter-spacing:-0.500px"><span class="u">G</span>o</div>
<div class="t" style="left:237.90px;top:31.86px;font-size:18px;letter-spacing:0.383px"><span class="u">M</span>essage</div>
<div class="t" style="left:328.60px;top:31.86px;font-size:18px;letter-spacing:-0.167px">Open<span class="u">P</span>GP</div>
<div class="t" style="left:425.00px;top:31.86px;font-size:18px;letter-spacing:1.075px"><span class="u">T</span>ools</div>
<div class="t" style="left:486.00px;top:31.86px;font-size:18px;letter-spacing:0.667px"><span class="u">H</span>elp</div>
<div class="a gtk" style="left:39px;top:57px;width:1069px;height:60px;border-top:1px solid #fff;border-left:1px solid #fff;border-bottom:1px solid #000;border-right:1px solid #000"></div>
<div class="t" style="left:46.70px;top:88.86px;font-size:18px;letter-spacing:0.757px">Get Mail</div>
<div class="t" style="left:141.40px;top:88.86px;font-size:18px;letter-spacing:1.175px">Write</div>
<div class="t" style="left:199.30px;top:88.86px;font-size:18px;letter-spacing:0.591px">Address Book</div>
<div class="t" style="left:344.90px;top:88.86px;font-size:18px;letter-spacing:1.333px">Decrypt</div>
<div class="t" style="left:455.70px;top:88.86px;font-size:18px;letter-spacing:0.425px">Reply</div>
<div class="t" style="left:515.70px;top:88.86px;font-size:18px;letter-spacing:0.825px">Reply All</div>
<div class="t" style="left:603.70px;top:88.86px;font-size:18px;letter-spacing:0.867px">Forward</div>
<div class="t" style="left:731.40px;top:88.86px;font-size:18px;letter-spacing:1.040px">Delete</div>
<div class="t" style="left:818.00px;top:88.86px;font-size:18px;letter-spacing:-0.700px">Junk</div>
<div class="t" style="left:883.70px;top:88.86px;font-size:18px;letter-spacing:0.750px">Print</div>
<div class="t" style="left:945.70px;top:88.86px;font-size:18px;letter-spacing:0.533px;color:#9c9c9c">Stop</div>
<div class="a" style="left:126px;top:86px;width:0;height:0;border-left:3.5px solid transparent;border-right:3.5px solid transparent;border-top:3.5px solid #000"></div>
<div class="a" style="left:930px;top:86px;width:0;height:0;border-left:3.5px solid transparent;border-right:3.5px solid transparent;border-top:3.5px solid #000"></div>
<!-- toolbar icons -->
<svg class="a" style="left:68px;top:61px" width="28" height="30" viewBox="0 0 28 30">
 <path d="M2 17 L7 13 H23 L27 17 V25 L23 28 H6 L2 25 Z" fill="#cfe2f6" stroke="#4f7fb8" stroke-width="1"/>
 <path d="M2 17 H27 V25 L23 28 H6 L2 25Z" fill="#a9c8ec" stroke="#4f7fb8" stroke-width="1"/>
 <path d="M7 15 H22 L24 17 H5Z" fill="#5d86b8"/>
 <path d="M8 2 Q16 1 17 9 H21 L14.5 16 L8 9 H12 Q12 6 8 6Z" fill="#6cd04a" stroke="#2e8a22" stroke-width="1"/>
</svg>
<svg class="a" style="left:150px;top:61px" width="30" height="30" viewBox="0 0 30 30">
 <path d="M2 9 L17 5 L22 24 L7 28 Z" fill="#e4eefa" stroke="#7a98c8" stroke-width="1"/>
 <path d="M6 12 L15 9.5 M7 15 L14 13 M8 18 L13 16.5" stroke="#9ab0d0" stroke-width=".9"/>
 <path d="M11 23 L24 4 Q26 2 28 4 Q29 6 27 8 L15 25 L10.5 26.5Z" fill="#5a8ae0" stroke="#23449a" stroke-width="1"/>
 <path d="M13 22 L25 5" stroke="#b8d2fa" stroke-width="1.3"/>
</svg>
<svg class="a" style="left:244px;top:62px" width="30" height="30" viewBox="0 0 30 30">
 <path d="M5 6 Q5 3 8 3 H22 Q25 3 25 6 V24 Q25 27 22 27 H8 Q5 27 5 24Z" fill="#e0905c" stroke="#8e4a20" stroke-width="1"/>
 <path d="M6 24 Q6 26 8 26 H22 Q24 26 24 24" fill="none" stroke="#f8e0c8" stroke-width="1.2"/>
 <rect x="10" y="9" width="10" height="4" rx="1" fill="#dfe8f4" stroke="#a86a40" stroke-width=".6"/>
 <path d="M24 6 Q28 6 27 10 M24 10 Q28 10 27 14" fill="none" stroke="#999" stroke-width="1.4"/>
</svg>
<svg class="a" style="left:364px;top:64px" width="28" height="24" viewBox="0 0 28 24">
 <path d="M2 3 H22 V17 H2 Z" fill="#fde7cc" stroke="#d4a070"/>
 <path d="M2 3 L12 11 L22 3" fill="none" stroke="#d4a070"/>
 <rect x="14" y="13" width="9" height="8" fill="#e8c84a" stroke="#9a7a20"/>
 <path d="M16 13 V10 a3 3 0 0 1 6 0" fill="none" stroke="#888" stroke-width="1.5"/>
</svg>
<svg class="a" style="left:466px;top:64px" width="28" height="24" viewBox="0 0 28 24">
 <path d="M2 3 H22 V17 H2 Z" fill="#fde7cc" stroke="#d4a070"/>
 <path d="M2 3 L12 11 L22 3" fill="none" stroke="#d4a070"/>
 <path d="M26 12 C26 20 18 22 14 20 L14 23 L9 18 L14 13 L14 16 C18 17 22 16 22 12 Z" fill="#58b840" stroke="#2c7a20" stroke-width=".8"/>
</svg>
<svg class="a" style="left:539px;top:64px" width="30" height="24" viewBox="0 0 30 24">
 <path d="M1 1 H19 V14 H1 Z" fill="#fde7cc" stroke="#d4a070"/>
 <path d="M4 4 H23 V18 H4 Z" fill="#fde7cc" stroke="#d4a070"/>
 <path d="M4 4 L13 12 L23 4" fill="none" stroke="#d4a070"/>
 <path d="M28 13 C28 21 20 23 16 21 L16 24 L11 19 L16 14 L16 17 C20 18 24 17 24 13 Z" fill="#48b0d8" stroke="#207090" stroke-width=".8"/>
</svg>
<svg class="a" style="left:624px;top:64px" width="28" height="26" viewBox="0 0 28 26">
 <path d="M2 3 H22 V17 H2 Z" fill="#fde7cc" stroke="#d4a070"/>
 <path d="M2 3 L12 11 L22 3" fill="none" stroke="#d4a070"/>
 <path d="M10 12 C10 20 16 22 20 20 L20 24 L26 18 L20 12 L20 16 C16 17 14 15 14 12 Z" fill="#8c6ee0" stroke="#4a3a9a" stroke-width=".8"/>
</svg>
<svg class="a" style="left:745px;top:63px" width="26" height="26" viewBox="0 0 26 26">
 <path d="M3 3 L23 23 M23 3 L3 23" stroke="#b02020" stroke-width="4.5" stroke-linecap="round"/>
 <path d="M3 3 L23 23 M23 3 L3 23" stroke="#e85050" stroke-width="2.5" stroke-linecap="round"/>
</svg>
<svg class="a" style="left:823px;top:62px" width="24" height="26" viewBox="0 0 24 26">
 <ellipse cx="12" cy="5" rx="10" ry="3" fill="#c8d8ec" stroke="#6a7a90"/>
 <path d="M2 5 L4 23 Q12 26 20 23 L22 5 Q12 9 2 5Z" fill="#a8c4e6" stroke="#5a6a80"/>
 <circle cx="12" cy="14" r="4.5" fill="none" stroke="#444" stroke-width="1.5"/>
 <path d="M9 11 L15 17" stroke="#444" stroke-width="1.5"/>
</svg>
<svg class="a" style="left:887px;top:63px" width="28" height="26" viewBox="0 0 28 26">
 <path d="M7 2 H19 L21 10 H7 Z" fill="#cfe0f4" stroke="#6a7a90"/>
 <path d="M2 10 H26 V20 H2 Z" fill="#dcdcdc" stroke="#555"/>
 <path d="M5 18 H23 V24 H5 Z" fill="#f4f4f4" stroke="#777"/>
</svg>
<svg class="a" style="left:951px;top:63px" width="26" height="26" viewBox="0 0 26 26" opacity=".45">
 <path d="M3 2 H15 L19 6 V24 H3 Z" fill="#eee" stroke="#aaa"/>
 <path d="M10 11 L22 23 M22 11 L10 23" stroke="#999" stroke-width="3.5"/>
</svg>
<svg class="a" style="left:1087px;top:78px" width="18" height="18" viewBox="0 0 18 18"><circle cx="9" cy="9" r="7" fill="none" stroke="#999" stroke-width="1.2" stroke-dasharray="1.5 2.5"/></svg>


<div class="a gtk" style="left:39px;top:117px;width:1069px;height:597px;"></div>
<div class="t" style="left:49.70px;top:122.06px;font-size:18px;letter-spacing:0.467px">Folders</div>
<div class="a " style="left:39px;top:146px;width:184px;height:568px;background:#fff"></div>
<div class="a " style="left:223px;top:146px;width:16px;height:568px;background:#c8c6c1;border-left:1px solid #9d9a93;border-right:1px solid #000"></div>
<div class="a btn" style="left:223px;top:146px;width:15px;height:15px;"></div>
<div class="a" style="left:226.5px;top:151px;width:0;height:0;border-left:4px solid transparent;border-right:4px solid transparent;border-bottom:5px solid #000"></div>
<div class="a" style="left:61px;top:214px;width:0;height:500px;border-left:1px dotted #999"></div>
<div class="a" style="left:78px;top:480px;width:0;height:112px;border-left:1px dotted #999"></div>
<div class="a" style="left:61px;top:166px;width:0;height:12px;border-left:1px dotted #999"></div>
<div class="a" style="left:41px;top:153px;width:10px;height:10px;border:1px solid #7a8ec0;background:#fff;border-radius:1px"></div><div class="a" style="left:43px;top:157px;width:6px;height:2px;background:#000"></div>
<div class="a" style="left:41px;top:201px;width:10px;height:10px;border:1px solid #7a8ec0;background:#fff;border-radius:1px"></div><div class="a" style="left:43px;top:205px;width:6px;height:2px;background:#000"></div>
<div class="a" style="left:57px;top:177px;width:10px;height:10px;border:1px solid #7a8ec0;background:#fff;border-radius:1px"></div><div class="a" style="left:59px;top:181px;width:6px;height:2px;background:#000"></div><div class="a" style="left:61px;top:179px;width:2px;height:6px;background:#000"></div>
<svg class="a" style="left:52px;top:148px" width="18" height="20" viewBox="0 0 18 20"><path d="M1.5 15 C1.5 7 7 3 13 5 L15 13 Z" fill="#9cbce6" stroke="#4a6aa0"/><path d="M3 13 C4 8 8 6 12 7" stroke="#e8f0fa" stroke-width="1.5" fill="none"/><rect x="9.5" y="11.5" width="7" height="6" fill="#e8c060" stroke="#8a6a20"/><path d="M11 11.5 V9.5 a2 2 0 0 1 4 0 V11.5" fill="none" stroke="#666"/><circle cx="13.5" cy="3.5" r="3" fill="#f07a20"/></svg>
<svg class="a" style="left:67px;top:172px" width="20" height="20" viewBox="0 0 20 20"><path d="M1 10 H15 V18 H1Z" fill="#b4d0f0" stroke="#4a6aa0"/><path d="M3 7 H13 V13 H3Z" fill="#fde7cc" stroke="#c09060"/><circle cx="15" cy="5" r="3.5" fill="#f06a28"/><path d="M15 1 V9 M11 5 H19" stroke="#f8c040" stroke-width="1"/></svg>
<svg class="a" style="left:52px;top:196px" width="18" height="20" viewBox="0 0 18 20"><rect x="2.5" y="2.5" width="13" height="10" rx="1" fill="#8ab8e8" stroke="#3a5a8a"/><path d="M4.5 4.5 H13.5 V10.5 H4.5Z" fill="#b8d8f8"/><path d="M6 14 H12 L15 18 H3Z" fill="#8a8a8a"/></svg>
<div class="a" style="left:62px;top:230px;width:6px;height:0;border-top:1px dotted #888"></div>
<div class="a" style="left:62px;top:254px;width:6px;height:0;border-top:1px dotted #888"></div>
<div class="a" style="left:62px;top:278px;width:6px;height:0;border-top:1px dotted #888"></div>
<div class="a" style="left:62px;top:302px;width:6px;height:0;border-top:1px dotted #888"></div>
<div class="a" style="left:62px;top:326px;width:6px;height:0;border-top:1px dotted #888"></div>
<div class="a" style="left:62px;top:350px;width:6px;height:0;border-top:1px dotted #888"></div>
<div class="a" style="left:62px;top:374px;width:6px;height:0;border-top:1px dotted #888"></div>
<div class="a" style="left:62px;top:398px;width:6px;height:0;border-top:1px dotted #888"></div>
<div class="a" style="left:62px;top:422px;width:6px;height:0;border-top:1px dotted #888"></div>
<div class="a" style="left:62px;top:446px;width:6px;height:0;border-top:1px dotted #888"></div>
<div class="a" style="left:62px;top:470px;width:6px;height:0;border-top:1px dotted #888"></div>
<div class="a" style="left:62px;top:614px;width:6px;height:0;border-top:1px dotted #888"></div>
<div class="a" style="left:62px;top:638px;width:6px;height:0;border-top:1px dotted #888"></div>
<div class="a" style="left:62px;top:662px;width:6px;height:0;border-top:1px dotted #888"></div>
<div class="a" style="left:62px;top:686px;width:6px;height:0;border-top:1px dotted #888"></div>
<svg class="a" style="left:68px;top:222px" width="18" height="18" viewBox="0 0 18 18"><path d="M1 8 H15 V16 H1Z" fill="#b4d0f0" stroke="#4a6aa0"/><path d="M3 4 H13 V11 H3Z" fill="#fde7cc" stroke="#c09060"/></svg>
<svg class="a" style="left:68px;top:245px" width="18" height="18" viewBox="0 0 18 18"><path d="M1 8 H15 V16 H1Z" fill="#b4d0f0" stroke="#4a6aa0"/><path d="M5 9 Q5 3 11 3 V1 L15 4 L11 7 V5 Q8 5 8 9Z" fill="#40a040"/></svg>
<svg class="a" style="left:68px;top:269px" width="18" height="18" viewBox="0 0 18 18"><path d="M1 6 L12 3 L15 14 L4 17Z" fill="#dce8f8" stroke="#6d8fc8"/><path d="M6 14 L15 1 L17 3 L8 16Z" fill="#4a78d0"/></svg>
<svg class="a" style="left:68px;top:293px" width="18" height="18" viewBox="0 0 18 18"><path d="M1 4 H16 V14 H1Z" fill="#fde7cc" stroke="#c09060"/><path d="M4 9 H13" stroke="#d04040" stroke-width="1.5"/></svg>
<svg class="a" style="left:68px;top:317px" width="18" height="18" viewBox="0 0 18 18"><path d="M2 3 L4 16 H13 L15 3Z" fill="#b8c8dc" stroke="#5a6a80"/><path d="M6 9 a3 3 0 1 0 5 0" fill="none" stroke="#30a030" stroke-width="1.5"/></svg>
<div class="a" style="left:56px;top:345px;width:10px;height:10px;border:1px solid #7a8ec0;background:#fff;border-radius:1px"></div><div class="a" style="left:58px;top:349px;width:6px;height:2px;background:#000"></div><div class="a" style="left:60px;top:347px;width:2px;height:6px;background:#000"></div>
<svg class="a" style="left:68px;top:342px" width="18" height="16" viewBox="0 0 18 16"><path d="M1 3 H7 L9 5 H16 V15 H1Z" fill="#f6d870" stroke="#c08a30"/><path d="M1 7 H16 V15 H1Z" fill="#fbe89a" stroke="#c08a30"/></svg>
<svg class="a" style="left:68px;top:366px" width="18" height="16" viewBox="0 0 18 16"><path d="M1 3 H7 L9 5 H16 V15 H1Z" fill="#f6d870" stroke="#c08a30"/><path d="M1 7 H16 V15 H1Z" fill="#fbe89a" stroke="#c08a30"/></svg>
<div class="a" style="left:56px;top:393px;width:10px;height:10px;border:1px solid #7a8ec0;background:#fff;border-radius:1px"></div><div class="a" style="left:58px;top:397px;width:6px;height:2px;background:#000"></div><div class="a" style="left:60px;top:395px;width:2px;height:6px;background:#000"></div>
<svg class="a" style="left:68px;top:390px" width="18" height="16" viewBox="0 0 18 16"><path d="M1 3 H7 L9 5 H16 V15 H1Z" fill="#f6d870" stroke="#c08a30"/><path d="M1 7 H16 V15 H1Z" fill="#fbe89a" stroke="#c08a30"/></svg>
<svg class="a" style="left:68px;top:414px" width="18" height="16" viewBox="0 0 18 16"><path d="M1 3 H7 L9 5 H16 V15 H1Z" fill="#f6d870" stroke="#c08a30"/><path d="M1 7 H16 V15 H1Z" fill="#fbe89a" stroke="#c08a30"/></svg>
<div class="a" style="left:56px;top:441px;width:10px;height:10px;border:1px solid #7a8ec0;background:#fff;border-radius:1px"></div><div class="a" style="left:58px;top:445px;width:6px;height:2px;background:#000"></div><div class="a" style="left:60px;top:443px;width:2px;height:6px;background:#000"></div>
<svg class="a" style="left:68px;top:438px" width="18" height="16" viewBox="0 0 18 16"><path d="M1 3 H7 L9 5 H16 V15 H1Z" fill="#f6d870" stroke="#c08a30"/><path d="M1 7 H16 V15 H1Z" fill="#fbe89a" stroke="#c08a30"/></svg>
<div class="a" style="left:56px;top:465px;width:10px;height:10px;border:1px solid #7a8ec0;background:#fff;border-radius:1px"></div><div class="a" style="left:58px;top:469px;width:6px;height:2px;background:#000"></div>
<svg class="a" style="left:68px;top:462px" width="18" height="16" viewBox="0 0 18 16"><path d="M1 3 H7 L9 5 H16 V15 H1Z" fill="#f6d870" stroke="#c08a30"/><path d="M1 7 H16 V15 H1Z" fill="#fbe89a" stroke="#c08a30"/></svg>
<div class="a" style="left:56px;top:609px;width:10px;height:10px;border:1px solid #7a8ec0;background:#fff;border-radius:1px"></div><div class="a" style="left:58px;top:613px;width:6px;height:2px;background:#000"></div><div class="a" style="left:60px;top:611px;width:2px;height:6px;background:#000"></div>
<svg class="a" style="left:68px;top:606px" width="18" height="16" viewBox="0 0 18 16"><path d="M1 3 H7 L9 5 H16 V15 H1Z" fill="#f6d870" stroke="#c08a30"/><path d="M1 7 H16 V15 H1Z" fill="#fbe89a" stroke="#c08a30"/></svg>
<div class="a" style="left:56px;top:633px;width:10px;height:10px;border:1px solid #7a8ec0;background:#fff;border-radius:1px"></div><div class="a" style="left:58px;top:637px;width:6px;height:2px;background:#000"></div><div class="a" style="left:60px;top:635px;width:2px;height:6px;background:#000"></div>
<svg class="a" style="left:68px;top:630px" width="18" height="16" viewBox="0 0 18 16"><path d="M1 3 H7 L9 5 H16 V15 H1Z" fill="#f6d870" stroke="#c08a30"/><path d="M1 7 H16 V15 H1Z" fill="#fbe89a" stroke="#c08a30"/></svg>
<svg class="a" style="left:68px;top:654px" width="18" height="16" viewBox="0 0 18 16"><path d="M1 3 H7 L9 5 H16 V15 H1Z" fill="#f6d870" stroke="#c08a30"/><path d="M1 7 H16 V15 H1Z" fill="#fbe89a" stroke="#c08a30"/></svg>
<div class="a" style="left:56px;top:681px;width:10px;height:10px;border:1px solid #7a8ec0;background:#fff;border-radius:1px"></div><div class="a" style="left:58px;top:685px;width:6px;height:2px;background:#000"></div>
<svg class="a" style="left:68px;top:678px" width="18" height="16" viewBox="0 0 18 16"><path d="M1 3 H7 L9 5 H16 V15 H1Z" fill="#f6d870" stroke="#c08a30"/><path d="M1 7 H16 V15 H1Z" fill="#fbe89a" stroke="#c08a30"/></svg>
<div class="a" style="left:79px;top:494px;width:6px;height:0;border-top:1px dotted #888"></div>
<div class="a" style="left:79px;top:518px;width:6px;height:0;border-top:1px dotted #888"></div>
<div class="a" style="left:79px;top:542px;width:6px;height:0;border-top:1px dotted #888"></div>
<div class="a" style="left:79px;top:566px;width:6px;height:0;border-top:1px dotted #888"></div>
<div class="a" style="left:79px;top:590px;width:6px;height:0;border-top:1px dotted #888"></div>
<div class="t" style="left:74.00px;top:147.86px;font-size:18px;letter-spacing:1.538px;font-weight:bold">eelco@...uu.nl</div>
<div class="t" style="left:89.60px;top:171.86px;font-size:18px;letter-spacing:1.791px;font-weight:bold">Inbox (5587)</div>
<div class="t" style="left:74.00px;top:195.86px;font-size:18px;letter-spacing:1.192px;font-weight:bold">Local Folders</div>
<div class="a " style="left:87px;top:218px;width:53px;height:24px;background:#dedbd6"></div>
<div class="t" style="left:89.60px;top:219.66px;font-size:18px;letter-spacing:0.725px">Inbox</div>
<div class="t" style="left:89.60px;top:243.66px;font-size:18px;letter-spacing:3.600px">Unsent</div>
<div class="t" style="left:250.70px;top:124.26px;font-size:18px;letter-spacing:1.050px">V<span class="u">i</span>ew:</div>
<div class="a btn" style="left:307px;top:120px;width:256px;height:30px;"></div>
<div class="t" style="left:313.00px;top:124.26px;font-size:18px;letter-spacing:0.000px">All</div>
<div class="a" style="left:542px;top:124px;width:1px;height:22px;background:#9d9a93;box-shadow:1px 0 0 #fff"></div>
<svg class="a" style="left:547px;top:126px" width="10" height="18" viewBox="0 0 10 18"><path d="M1 7 L5 2.5 L9 7Z M1 11 L5 15.5 L9 11Z" fill="#000"/></svg>
<div class="a " style="left:763px;top:121px;width:341px;height:29px;background:#fff;border-top:1px solid #000;border-left:1px solid #000;border-right:1px solid #dedbd6;border-bottom:1px solid #dedbd6"></div>
<svg class="a" style="left:768px;top:125px" width="22" height="22" viewBox="0 0 22 22"><circle cx="12" cy="8" r="5.5" fill="#e8eef6" stroke="#505a6a" stroke-width="1.6"/><path d="M8 12 L3 17" stroke="#a86a30" stroke-width="3" stroke-linecap="round"/><path d="M16 17 H21 L18.5 20Z" fill="#000"/></svg>
<div class="t" style="left:794.60px;top:126.26px;font-size:18px;letter-spacing:0.838px;color:#a0a0a0">Subject or Sender</div>
<div class="a " style="left:245px;top:152px;width:863px;height:182px;background:#fff"></div>
<div class="a btn" style="left:246px;top:152px;width:20px;height:27px;"></div>
<div class="a btn" style="left:266px;top:152px;width:22px;height:27px;"></div>
<div class="a btn" style="left:289px;top:152px;width:366px;height:27px;"></div>
<div class="a btn" style="left:656px;top:152px;width:21px;height:27px;"></div>
<div class="a btn" style="left:678px;top:152px;width:242px;height:27px;"></div>
<div class="a btn" style="left:920px;top:152px;width:23px;height:27px;"></div>
<div class="a btn" style="left:943px;top:152px;width:144px;height:27px;"></div>
<div class="a btn" style="left:1087px;top:152px;width:21px;height:27px;"></div>
<svg class="a" style="left:249px;top:158px" width="14" height="14" viewBox="0 0 14 14"><ellipse cx="7" cy="6" rx="5" ry="4.2" fill="#8a8a8a"/><path d="M5 9 L4 12.5 L8.5 9Z" fill="#8a8a8a"/></svg>
<svg class="a" style="left:270px;top:156px" width="14" height="18" viewBox="0 0 14 18"><path d="M5 5 V13 a2.2 2.2 0 0 0 4.4 0 V4 a3.3 3.3 0 0 0 -6.6 0 V12" fill="none" stroke="#9a9a9a" stroke-width="1.3"/></svg>
<div class="t" style="left:296.50px;top:156.26px;font-size:18px;letter-spacing:0.833px">Subject</div>
<svg class="a" style="left:658px;top:158px" width="18" height="14" viewBox="0 0 18 14"><path d="M2 5 L6 10 L9 5 L12 10 L16 6" fill="none" stroke="#8a8a8a" stroke-width="2.2"/></svg>
<div class="t" style="left:684.00px;top:156.26px;font-size:18px;letter-spacing:1.000px">Sender</div>
<svg class="a" style="left:923px;top:157px" width="16" height="16" viewBox="0 0 16 16"><circle cx="8" cy="8" r="5.5" fill="none" stroke="#777" stroke-width="1.8"/><path d="M4.5 4.5 L11.5 11.5" stroke="#777" stroke-width="1.8"/></svg>
<div class="t" style="left:950.90px;top:155.86px;font-size:18px;letter-spacing:1.000px">Date</div>
<svg class="a" style="left:1090px;top:158px" width="14" height="14" viewBox="0 0 14 14"><rect x="1.5" y="1.5" width="9" height="8" fill="none" stroke="#333"/><path d="M1.5 5 H10.5 M6 1.5 V9.5" stroke="#333"/><path d="M8 10 L13 10 L10.5 13Z" fill="#000"/></svg>
<div class="a " style="left:245px;top:298px;width:847px;height:24px;background:#dedbd6"></div>
<svg class="a" style="left:290px;top:182px" width="18" height="18" viewBox="0 0 18 18"><path d="M1.5 7 Q9 0.5 16.5 7 V16.5 H1.5Z" fill="#fbe3c6" stroke="#c48a5e" stroke-width="1.1"/><path d="M3.5 6.5 Q9 2.5 14.5 6.5 L9 10.5Z" fill="#cfe0f6"/><path d="M1.5 7 L9 11.5 L16.5 7" fill="#f6d6b0" stroke="#c48a5e" stroke-width=".9"/><path d="M1.5 16.5 L7.5 11 M16.5 16.5 L10.5 11" stroke="#dcb08a" stroke-width=".9"/></svg>
<div class="t" style="left:309.70px;top:181.86px;font-size:18px;letter-spacing:1.000px">SVN commit: trace - 8192 - mbrave...</div>
<div class="a" style="left:664px;top:188px;width:5px;height:5px;border:1px solid #888;border-radius:50%"></div>
<div class="t" style="left:680.00px;top:181.86px;font-size:18px;letter-spacing:1.000px">Martin Bravenboer</div>
<div class="a" style="left:930px;top:188px;width:5px;height:5px;border:1px solid #888;border-radius:50%"></div>
<div class="t" style="left:945.70px;top:181.86px;font-size:18px;letter-spacing:0.675px">20:31</div>
<svg class="a" style="left:290px;top:206px" width="18" height="18" viewBox="0 0 18 18"><path d="M1.5 7 Q9 0.5 16.5 7 V16.5 H1.5Z" fill="#fbe3c6" stroke="#c48a5e" stroke-width="1.1"/><path d="M3.5 6.5 Q9 2.5 14.5 6.5 L9 10.5Z" fill="#cfe0f6"/><path d="M1.5 7 L9 11.5 L16.5 7" fill="#f6d6b0" stroke="#c48a5e" stroke-width=".9"/><path d="M1.5 16.5 L7.5 11 M16.5 16.5 L10.5 11" stroke="#dcb08a" stroke-width=".9"/></svg>
<div class="t" style="left:309.70px;top:205.86px;font-size:18px;letter-spacing:1.000px">SVN commit: trace - 8193 - mbrave...</div>
<div class="a" style="left:664px;top:212px;width:5px;height:5px;border:1px solid #888;border-radius:50%"></div>
<div class="t" style="left:680.00px;top:205.86px;font-size:18px;letter-spacing:1.000px">Martin Bravenboer</div>
<div class="a" style="left:930px;top:212px;width:5px;height:5px;border:1px solid #888;border-radius:50%"></div>
<div class="t" style="left:945.70px;top:205.86px;font-size:18px;letter-spacing:0.675px">20:34</div>
<svg class="a" style="left:290px;top:230px" width="18" height="18" viewBox="0 0 18 18"><path d="M1.5 7 Q9 0.5 16.5 7 V16.5 H1.5Z" fill="#fbe3c6" stroke="#c48a5e" stroke-width="1.1"/><path d="M3.5 6.5 Q9 2.5 14.5 6.5 L9 10.5Z" fill="#cfe0f6"/><path d="M1.5 7 L9 11.5 L16.5 7" fill="#f6d6b0" stroke="#c48a5e" stroke-width=".9"/><path d="M1.5 16.5 L7.5 11 M16.5 16.5 L10.5 11" stroke="#dcb08a" stroke-width=".9"/></svg>
<div class="t" style="left:309.70px;top:229.86px;font-size:18px;letter-spacing:0.645px">Re: [RFC] FSFS filesystem options (l...</div>
<div class="a" style="left:664px;top:236px;width:5px;height:5px;border:1px solid #888;border-radius:50%"></div>
<div class="t" style="left:680.00px;top:229.86px;font-size:18px;letter-spacing:0.800px">Greg Hudson</div>
<div class="a" style="left:930px;top:236px;width:5px;height:5px;border:1px solid #888;border-radius:50%"></div>
<div class="t" style="left:945.70px;top:229.86px;font-size:18px;letter-spacing:0.675px">20:37</div>
<svg class="a" style="left:290px;top:254px" width="18" height="18" viewBox="0 0 18 18"><path d="M1.5 7 Q9 0.5 16.5 7 V16.5 H1.5Z" fill="#fbe3c6" stroke="#c48a5e" stroke-width="1.1"/><path d="M3.5 6.5 Q9 2.5 14.5 6.5 L9 10.5Z" fill="#cfe0f6"/><path d="M1.5 7 L9 11.5 L16.5 7" fill="#f6d6b0" stroke="#c48a5e" stroke-width=".9"/><path d="M1.5 16.5 L7.5 11 M16.5 16.5 L10.5 11" stroke="#dcb08a" stroke-width=".9"/></svg>
<div class="t" style="left:309.70px;top:253.86px;font-size:18px;letter-spacing:1.000px">SVN commit: trace - 8194 - mbrave...</div>
<div class="a" style="left:664px;top:260px;width:5px;height:5px;border:1px solid #888;border-radius:50%"></div>
<div class="t" style="left:680.00px;top:253.86px;font-size:18px;letter-spacing:1.000px">Martin Bravenboer</div>
<div class="a" style="left:930px;top:260px;width:5px;height:5px;border:1px solid #888;border-radius:50%"></div>
<div class="t" style="left:945.70px;top:253.86px;font-size:18px;letter-spacing:0.675px">20:36</div>
<svg class="a" style="left:290px;top:278px" width="18" height="18" viewBox="0 0 18 18"><path d="M1.5 7 Q9 0.5 16.5 7 V16.5 H1.5Z" fill="#fbe3c6" stroke="#c48a5e" stroke-width="1.1"/><path d="M3.5 6.5 Q9 2.5 14.5 6.5 L9 10.5Z" fill="#cfe0f6"/><path d="M1.5 7 L9 11.5 L16.5 7" fill="#f6d6b0" stroke="#c48a5e" stroke-width=".9"/><path d="M1.5 16.5 L7.5 11 M16.5 16.5 L10.5 11" stroke="#dcb08a" stroke-width=".9"/></svg>
<div class="t" style="left:309.70px;top:277.86px;font-size:18px;letter-spacing:0.889px">Re: SVN commit: trace - 8195 - mbr...</div>
<div class="a" style="left:664px;top:284px;width:5px;height:5px;border:1px solid #888;border-radius:50%"></div>
<div class="t" style="left:680.00px;top:277.86px;font-size:18px;letter-spacing:1.000px">Martin Bravenboer</div>
<div class="a" style="left:930px;top:284px;width:5px;height:5px;border:1px solid #888;border-radius:50%"></div>
<div class="t" style="left:945.70px;top:277.86px;font-size:18px;letter-spacing:0.675px">20:38</div>
<svg class="a" style="left:290px;top:302px" width="18" height="18" viewBox="0 0 18 18"><path d="M1.5 7 Q9 0.5 16.5 7 V16.5 H1.5Z" fill="#fbe3c6" stroke="#c48a5e" stroke-width="1.1"/><path d="M3.5 6.5 Q9 2.5 14.5 6.5 L9 10.5Z" fill="#cfe0f6"/><path d="M1.5 7 L9 11.5 L16.5 7" fill="#f6d6b0" stroke="#c48a5e" stroke-width=".9"/><path d="M1.5 16.5 L7.5 11 M16.5 16.5 L10.5 11" stroke="#dcb08a" stroke-width=".9"/></svg>
<div class="t" style="left:309.70px;top:301.86px;font-size:18px;letter-spacing:0.645px">Re: [RFC] FSFS filesystem options (l...</div>
<div class="a" style="left:664px;top:308px;width:5px;height:5px;border:1px solid #888;border-radius:50%"></div>
<div class="t" style="left:680.00px;top:301.86px;font-size:18px;letter-spacing:0.800px">Greg Hudson</div>
<div class="a" style="left:930px;top:308px;width:5px;height:5px;border:1px solid #888;border-radius:50%"></div>
<div class="t" style="left:945.70px;top:301.86px;font-size:18px;letter-spacing:0.675px">20:39</div>
<div class="a " style="left:1092px;top:179px;width:16px;height:155px;background:#c4c2bd"></div>
<div class="a btn" style="left:1092px;top:179px;width:15px;height:15px;"></div>
<div class="a" style="left:1095.5px;top:184px;width:0;height:0;border-left:4px solid transparent;border-right:4px solid transparent;border-bottom:5px solid #000"></div>
<div class="a btn" style="left:1092px;top:297px;width:15px;height:22px;"></div>
<div class="a btn" style="left:1092px;top:319px;width:15px;height:15px;"></div>
<div class="a" style="left:1095.5px;top:324px;width:0;height:0;border-left:4px solid transparent;border-right:4px solid transparent;border-top:5px solid #000"></div>
<div class="a gtk" style="left:245px;top:334px;width:863px;height:6px;border-top:1px solid #9d9a93"></div>
<div class="a " style="left:245px;top:340px;width:863px;height:22px;background:#fdfacd"></div>
<div class="t" style="left:852.00px;top:363.86px;font-size:18px;letter-spacing:0.667px;font-weight:bold;clip-path:inset(0 0 0 0)">ion?</div>
<svg class="a" style="left:1066px;top:406px" width="30" height="30" viewBox="0 0 30 30"><path d="M4 26 L3 20 L15 4 Q18 1 21 3 Q23 6 21 9 L9 25 Z" fill="#4a78e0" stroke="#1e3a90" stroke-width="1.2"/><path d="M6 20 L17 5" stroke="#b8d0ff" stroke-width="2"/><path d="M3 20 L9 25 L4 26Z" fill="#c8d8f8" stroke="#1e3a90" stroke-width=".8"/><path d="M20 18 Q20 14 24 14 Q28 14 27.5 18 Q27 20 24.5 21 V23" fill="none" stroke="#3040b0" stroke-width="2"/><circle cx="24.5" cy="26.5" r="1.3" fill="#3040b0"/></svg>
<div class="a " style="left:245px;top:482px;width:847px;height:232px;background:#fff;border-top:1px solid #000"></div>
<div class="a " style="left:1092px;top:482px;width:16px;height:232px;background:#c4c2bd;border-top:1px solid #000"></div>
<div class="a btn" style="left:1092px;top:484px;width:15px;height:15px;"></div>
<div class="a" style="left:1095.5px;top:489px;width:0;height:0;border-left:4px solid transparent;border-right:4px solid transparent;border-bottom:5px solid #000"></div>
<div class="a btn" style="left:1092px;top:499px;width:15px;height:101px;"></div>
<div class="a btn" style="left:1092px;top:697px;width:15px;height:15px;"></div>
<div class="a" style="left:1095.5px;top:702px;width:0;height:0;border-left:4px solid transparent;border-right:4px solid transparent;border-top:5px solid #000"></div>
<div class="t" style="right:343px;top:565px;font-family:'Liberation Mono',monospace;font-size:11.4px;letter-spacing:0;transform:scaleY(1.12);transform-origin:100% 70%">Subversion client on a 1.4.3 installation,</div>
<div class="a " style="left:1066px;top:565px;width:2px;height:37px;background:#20907f"></div>
<div class="a " style="left:1074px;top:551px;width:2px;height:101px;background:#8a1414"></div>
<div class="a " style="left:1082px;top:505px;width:2px;height:200px;background:#1414e8"></div>
<div class="a gtk" style="left:39px;top:714px;width:1069px;height:30px;"></div>
<div class="a " style="left:39px;top:713px;width:1069px;height:1px;background:#000"></div>
<div class="a " style="left:39px;top:715px;width:25px;height:27px;border-top:1px solid #9d9a93;border-left:1px solid #9d9a93;border-right:1px solid #fff;border-bottom:1px solid #fff"></div>
<div class="a " style="left:65px;top:715px;width:20px;height:27px;border-top:1px solid #9d9a93;border-left:1px solid #9d9a93;border-right:1px solid #fff;border-bottom:1px solid #fff"></div>
<div class="a " style="left:875px;top:715px;width:109px;height:27px;border-top:1px solid #9d9a93;border-left:1px solid #9d9a93;border-right:1px solid #fff;border-bottom:1px solid #fff"></div>
<div class="a " style="left:985px;top:715px;width:101px;height:27px;border-top:1px solid #9d9a93;border-left:1px solid #9d9a93;border-right:1px solid #fff;border-bottom:1px solid #fff"></div>
<div class="a " style="left:1087px;top:715px;width:20px;height:27px;border-top:1px solid #9d9a93;border-left:1px solid #9d9a93;border-right:1px solid #fff;border-bottom:1px solid #fff"></div>
<svg class="a" style="left:42px;top:717px" width="20" height="22" viewBox="0 0 20 22"><path d="M4 5 Q8 1 11 4 Q8 8 6 11 Q10 15 16 16" fill="none" stroke="#555" stroke-width="2.2" stroke-linecap="round"/><path d="M3 4 L6 2" stroke="#777" stroke-width="1.5"/></svg>
<div class="t" style="left:886.80px;top:718.26px;font-size:18px;letter-spacing:0.875px">Unread: 0</div>
<div class="t" style="left:996.00px;top:718.26px;font-size:18px;letter-spacing:1.350px">Total: 79</div>
<svg class="a" style="left:1089px;top:718px" width="17" height="20" viewBox="0 0 17 20"><path d="M3 18 L8 10" stroke="#9a9a9a" stroke-width="2.2"/><path d="M5 7 Q6 2 11 2.5 Q15 4 12 9 L9.5 11.5" fill="none" stroke="#e01818" stroke-width="2.8"/></svg>
<!-- DIALOG -->
<div class="a" style="left:83px;top:253px;width:768px;height:662px;background:#dedbd6;border-radius:6px 6px 0 0;box-shadow:1px 1px 0 #2a2a2a, 2px 2px 2px rgba(0,0,0,.35), 0 0 0 1px rgba(40,40,40,.3)"></div>
<div class="a" style="left:83px;top:253px;width:768px;height:25px;border-radius:6px 6px 0 0;background:linear-gradient(180deg,#7590ac 0,#56738f 2px,#4e6b89 8px,#4a6684 100%)"></div>
<div class="a" style="left:83px;top:277px;width:768px;height:1px;background:#2c4058"></div>
<div class="t" style="left:309.70px;top:253.86px;font-size:18px;letter-spacing:1.000px;color:rgba(35,55,85,.6)">SVN commit: trace - 8194 - mbrave...</div>
<svg class="a" style="left:291px;top:254px" width="17" height="17" viewBox="0 0 17 17" opacity=".25"><path d="M1 6 L8.5 1.5 L16 6 V15.5 H1Z" fill="#fde2bf" stroke="#223"/></svg>
<div class="t" style="left:680.00px;top:253.86px;font-size:18px;letter-spacing:1.000px;color:rgba(35,55,85,.6)">Martin Bravenboer</div>
<svg class="a" style="left:90px;top:258px" width="16" height="16" viewBox="0 0 16 16"><path d="M1 7 L8 1 L15 7 V15 H1 Z" fill="#f0e8d0" stroke="#222" stroke-width="1.4"/><path d="M1 7 L8 11 L15 7" fill="#dde6f4" stroke="#666"/></svg>
<div class="t" style="left:109.70px;top:255.76px;font-size:18px;letter-spacing:1.755px;font-weight:bold;color:#fff;text-shadow:1px 1px 0 rgba(0,0,0,.3)">Open Message</div>
<svg class="a" style="left:832px;top:259px" width="14" height="14" viewBox="0 0 14 14"><path d="M2.5 2.5 L11.5 11.5 M11.5 2.5 L2.5 11.5" stroke="#555" stroke-width="4.5" stroke-linecap="round"/><path d="M2.5 2.5 L11.5 11.5 M11.5 2.5 L2.5 11.5" stroke="#f4f4f4" stroke-width="2.6" stroke-linecap="round"/></svg>
<div class="a btn" style="left:100px;top:291px;width:30px;height:32px"></div>
<svg class="a" style="left:106px;top:297px" width="20" height="20" viewBox="0 0 20 20"><rect x="1.5" y="2.5" width="15" height="15" rx="1.5" fill="#eeeeec" stroke="#555" stroke-width="1.2"/><path d="M4 6 H12 M4 9 H10 M4 12 H9" stroke="#bbb"/><path d="M8 14 L16 5 L18 7 L10 15.5 L7.5 16Z" fill="#f0c030" stroke="#333" stroke-width=".8"/></svg>
<div class="a btn" style="left:142px;top:291px;width:26px;height:32px"></div>
<div class="a" style="left:151px;top:302px;width:0;height:0;border-top:6px solid transparent;border-bottom:6px solid transparent;border-right:6px solid #888"></div>
<div class="a" style="left:168px;top:291px;width:26px;height:32px;background:#c8c6c0;border-top:1px solid #000;border-left:1px solid #000;border-bottom:1px solid #fff;border-right:1px solid #fff"></div>
<svg class="a" style="left:173px;top:299px" width="16" height="16" viewBox="0 0 16 16"><rect x="2" y="1" width="12" height="14" rx="2" fill="#9a9a98" stroke="#555"/><circle cx="8" cy="9" r="4" fill="#d8d8d6" stroke="#666"/><circle cx="8" cy="9" r="1.2" fill="#555"/><path d="M4 3 L7 6" stroke="#3a3" stroke-width="1.5"/></svg>
<div class="a btn" style="left:194px;top:291px;width:40px;height:32px"></div>
<div class="t" style="left:201.40px;top:295.66px;font-size:18px;letter-spacing:1.350px">nix</div>
<div class="a btn" style="left:234px;top:291px;width:64px;height:32px"></div>
<div class="t" style="left:242.10px;top:295.66px;font-size:18px;letter-spacing:1.800px">store</div>
<div class="a btn" style="left:808px;top:291px;width:26px;height:32px"></div>
<div class="a" style="left:818px;top:301px;width:0;height:0;border-top:6px solid transparent;border-bottom:6px solid transparent;border-left:6px solid #000"></div>
<div class="a" style="left:101px;top:336px;width:215px;height:465px;background:#fff;border-top:1px solid #000;border-left:1px solid #000;border-right:1px solid #fff;border-bottom:1px solid #fff"></div>
<div class="a btn" style="left:102px;top:337px;width:213px;height:31px"></div>
<div class="t" style="left:106.00px;top:343.16px;font-size:18px;letter-spacing:0.600px"><span class="u">P</span>laces</div>
<div class="a" style="left:102px;top:429px;width:213px;height:30px;background:#9d9b96"></div>
<svg class="a" style="left:104px;top:374px" width="16" height="18" viewBox="0 0 16 18"><path d="M2.5 1.5 H10 L13.5 5 V16.5 H2.5Z" fill="#f4f4f2" stroke="#222" stroke-width="1.1"/></svg>
<div class="t" style="left:124.70px;top:373.86px;font-size:18px;letter-spacing:1.300px;color:#000">eelco</div>
<svg class="a" style="left:104px;top:404px" width="16" height="18" viewBox="0 0 16 18"><path d="M2.5 1.5 H10 L13.5 5 V16.5 H2.5Z" fill="#f4f4f2" stroke="#222" stroke-width="1.1"/></svg>
<div class="t" style="left:124.70px;top:403.86px;font-size:18px;letter-spacing:1.533px;color:#000">Desktop</div>
<svg class="a" style="left:104px;top:435px" width="16" height="16" viewBox="0 0 16 16"><rect x="2" y="1" width="12" height="14" rx="2" fill="#8a8a88" stroke="#444"/><circle cx="8" cy="9" r="4" fill="#e0e0de" stroke="#555"/><circle cx="8" cy="9" r="1.2" fill="#555"/><path d="M4 3 L7 6" stroke="#3a3" stroke-width="1.5"/></svg>
<div class="t" style="left:124.70px;top:433.86px;font-size:18px;letter-spacing:0.900px;color:#fff">File System</div>
<div class="a" style="left:318px;top:576.0px;width:2px;height:1px;background:#555"></div>
<div class="a" style="left:318px;top:578.5px;width:2px;height:1px;background:#555"></div>
<div class="a" style="left:318px;top:581.0px;width:2px;height:1px;background:#555"></div>
<div class="a" style="left:318px;top:583.5px;width:2px;height:1px;background:#555"></div>
<div class="a" style="left:318px;top:586.0px;width:2px;height:1px;background:#555"></div>
<div class="a" style="left:318px;top:588.5px;width:2px;height:1px;background:#555"></div>
<div class="a" style="left:318px;top:591.0px;width:2px;height:1px;background:#555"></div>
<div class="a" style="left:318px;top:593.5px;width:2px;height:1px;background:#555"></div>
<div class="a" style="left:318px;top:596.0px;width:2px;height:1px;background:#555"></div>
<div class="a" style="left:318px;top:598.5px;width:2px;height:1px;background:#555"></div>
<div class="a" style="left:318px;top:601.0px;width:2px;height:1px;background:#555"></div>
<div class="a" style="left:318px;top:603.5px;width:2px;height:1px;background:#555"></div>
<div class="a" style="left:321px;top:336px;width:513px;height:465px;background:#fff;border-top:1px solid #000;border-left:1px solid #000;border-right:1px solid #fff;border-bottom:1px solid #fff"></div>
<div class="a btn" style="left:322px;top:337px;width:412px;height:31px"></div>
<div class="t" style="left:329.40px;top:343.06px;font-size:18px;letter-spacing:1.333px">Name</div>
<div class="a" style="left:716px;top:350px;width:0;height:0;border-left:5px solid transparent;border-right:5px solid transparent;border-top:5px solid #000"></div>
<div class="a btn" style="left:734px;top:337px;width:98px;height:31px"></div>
<div class="t" style="left:740.40px;top:342.86px;font-size:18px;letter-spacing:1.457px">Modified</div>
<div class="a" style="left:322px;top:368px;width:510px;height:30px;background:#4b6983;outline:1px dotted #c8d4e0;outline-offset:-1px"></div>
<svg class="a" style="left:325px;top:376px" width="18" height="15" viewBox="0 0 18 15"><path d="M1.5 2.5 H6 L7.5 4 H14 V7 H4 Z" fill="#c8cfa8" stroke="#222" stroke-width="1"/><path d="M1.5 13.5 L4 6.5 H17 L14.5 13.5Z" fill="#c8cfa8" stroke="#222" stroke-width="1"/><path d="M1.5 2.5 V13.5" stroke="#222"/></svg>
<div class="t" style="left:346.20px;top:373.96px;font-size:18px;letter-spacing:1.600px;color:#fff">bin</div>
<div class="t" style="left:738.30px;top:374.06px;font-size:18px;letter-spacing:1.300px;color:#fff">Yesterday</div>
<div class="a" style="left:322px;top:398px;width:510px;height:30px;background:#ededeb"></div>
<svg class="a" style="left:325px;top:406px" width="18" height="15" viewBox="0 0 18 15"><path d="M1.5 2.5 H6 L7.5 4 H14 V7 H4 Z" fill="#c8cfa8" stroke="#222" stroke-width="1"/><path d="M1.5 13.5 L4 6.5 H17 L14.5 13.5Z" fill="#c8cfa8" stroke="#222" stroke-width="1"/><path d="M1.5 2.5 V13.5" stroke="#222"/></svg>
<div class="t" style="left:346.20px;top:403.96px;font-size:18px;letter-spacing:1.600px;color:#000">boot</div>
<div class="t" style="left:738.30px;top:404.06px;font-size:18px;letter-spacing:0.671px;color:#000">26-02-07</div>
<svg class="a" style="left:325px;top:436px" width="18" height="15" viewBox="0 0 18 15"><path d="M1.5 2.5 H6 L7.5 4 H14 V7 H4 Z" fill="#c8cfa8" stroke="#222" stroke-width="1"/><path d="M1.5 13.5 L4 6.5 H17 L14.5 13.5Z" fill="#c8cfa8" stroke="#222" stroke-width="1"/><path d="M1.5 2.5 V13.5" stroke="#222"/></svg>
<div class="t" style="left:346.20px;top:433.96px;font-size:18px;letter-spacing:1.740px;color:#000">dev</div>
<div class="t" style="left:738.30px;top:434.06px;font-size:18px;letter-spacing:1.000px;color:#000">Today</div>
<div class="a" style="left:322px;top:458px;width:510px;height:30px;background:#ededeb"></div>
<svg class="a" style="left:325px;top:466px" width="18" height="15" viewBox="0 0 18 15"><path d="M1.5 2.5 H6 L7.5 4 H14 V7 H4 Z" fill="#c8cfa8" stroke="#222" stroke-width="1"/><path d="M1.5 13.5 L4 6.5 H17 L14.5 13.5Z" fill="#c8cfa8" stroke="#222" stroke-width="1"/><path d="M1.5 2.5 V13.5" stroke="#222"/></svg>
<div class="t" style="left:346.20px;top:463.96px;font-size:18px;letter-spacing:1.440px;color:#000">etc</div>
<div class="t" style="left:738.30px;top:464.06px;font-size:18px;letter-spacing:1.000px;color:#000">Today</div>
<svg class="a" style="left:325px;top:496px" width="18" height="15" viewBox="0 0 18 15"><path d="M1.5 2.5 H6 L7.5 4 H14 V7 H4 Z" fill="#c8cfa8" stroke="#222" stroke-width="1"/><path d="M1.5 13.5 L4 6.5 H17 L14.5 13.5Z" fill="#c8cfa8" stroke="#222" stroke-width="1"/><path d="M1.5 2.5 V13.5" stroke="#222"/></svg>
<div class="t" style="left:346.20px;top:493.96px;font-size:18px;letter-spacing:1.800px;color:#000">home</div>
<div class="t" style="left:738.30px;top:494.06px;font-size:18px;letter-spacing:0.814px;color:#000">30-10-05</div>
<div class="a" style="left:322px;top:518px;width:510px;height:30px;background:#ededeb"></div>
<svg class="a" style="left:325px;top:526px" width="18" height="15" viewBox="0 0 18 15"><path d="M1.5 2.5 H6 L7.5 4 H14 V7 H4 Z" fill="#c8cfa8" stroke="#222" stroke-width="1"/><path d="M1.5 13.5 L4 6.5 H17 L14.5 13.5Z" fill="#c8cfa8" stroke="#222" stroke-width="1"/><path d="M1.5 2.5 V13.5" stroke="#222"/></svg>
<div class="t" style="left:346.20px;top:523.96px;font-size:18px;letter-spacing:1.667px;color:#000">lost+found</div>
<div class="t" style="left:738.30px;top:524.06px;font-size:18px;letter-spacing:0.671px;color:#000">26-02-07</div>
<svg class="a" style="left:325px;top:556px" width="18" height="15" viewBox="0 0 18 15"><path d="M1.5 2.5 H6 L7.5 4 H14 V7 H4 Z" fill="#c8cfa8" stroke="#222" stroke-width="1"/><path d="M1.5 13.5 L4 6.5 H17 L14.5 13.5Z" fill="#c8cfa8" stroke="#222" stroke-width="1"/><path d="M1.5 2.5 V13.5" stroke="#222"/></svg>
<div class="t" style="left:346.20px;top:553.96px;font-size:18px;letter-spacing:1.800px;color:#000">mnt</div>
<div class="t" style="left:738.30px;top:554.06px;font-size:18px;letter-spacing:0.671px;color:#000">26-02-07</div>
<div class="a" style="left:322px;top:578px;width:510px;height:30px;background:#ededeb"></div>
<svg class="a" style="left:325px;top:586px" width="18" height="15" viewBox="0 0 18 15"><path d="M1.5 2.5 H6 L7.5 4 H14 V7 H4 Z" fill="#c8cfa8" stroke="#222" stroke-width="1"/><path d="M1.5 13.5 L4 6.5 H17 L14.5 13.5Z" fill="#c8cfa8" stroke="#222" stroke-width="1"/><path d="M1.5 2.5 V13.5" stroke="#222"/></svg>
<div class="t" style="left:346.20px;top:583.96px;font-size:18px;letter-spacing:1.380px;color:#000">nix</div>
<div class="t" style="left:738.30px;top:584.06px;font-size:18px;letter-spacing:0.671px;color:#000">26-02-07</div>
<svg class="a" style="left:325px;top:616px" width="18" height="15" viewBox="0 0 18 15"><path d="M1.5 2.5 H6 L7.5 4 H14 V7 H4 Z" fill="#c8cfa8" stroke="#222" stroke-width="1"/><path d="M1.5 13.5 L4 6.5 H17 L14.5 13.5Z" fill="#c8cfa8" stroke="#222" stroke-width="1"/><path d="M1.5 2.5 V13.5" stroke="#222"/></svg>
<div class="t" style="left:346.20px;top:613.96px;font-size:18px;letter-spacing:1.400px;color:#000">proc</div>
<div class="t" style="left:738.30px;top:614.06px;font-size:18px;letter-spacing:1.300px;color:#000">Yesterday</div>
<div class="a" style="left:322px;top:638px;width:510px;height:30px;background:#ededeb"></div>
<svg class="a" style="left:325px;top:646px" width="18" height="15" viewBox="0 0 18 15"><path d="M1.5 2.5 H6 L7.5 4 H14 V7 H4 Z" fill="#c8cfa8" stroke="#222" stroke-width="1"/><path d="M1.5 13.5 L4 6.5 H17 L14.5 13.5Z" fill="#c8cfa8" stroke="#222" stroke-width="1"/><path d="M1.5 2.5 V13.5" stroke="#222"/></svg>
<div class="t" style="left:346.20px;top:643.96px;font-size:18px;letter-spacing:1.240px;color:#000">root</div>
<div class="t" style="left:738.30px;top:644.06px;font-size:18px;letter-spacing:1.000px;color:#000">Today</div>
<svg class="a" style="left:325px;top:676px" width="18" height="15" viewBox="0 0 18 15"><path d="M1.5 2.5 H6 L7.5 4 H14 V7 H4 Z" fill="#c8cfa8" stroke="#222" stroke-width="1"/><path d="M1.5 13.5 L4 6.5 H17 L14.5 13.5Z" fill="#c8cfa8" stroke="#222" stroke-width="1"/><path d="M1.5 2.5 V13.5" stroke="#222"/></svg>
<div class="t" style="left:346.20px;top:673.96px;font-size:18px;letter-spacing:1.520px;color:#000">suse</div>
<div class="t" style="left:738.30px;top:674.06px;font-size:18px;letter-spacing:1.200px;color:#000">zaterdag</div>
<div class="a" style="left:322px;top:698px;width:510px;height:30px;background:#ededeb"></div>
<svg class="a" style="left:325px;top:706px" width="18" height="15" viewBox="0 0 18 15"><path d="M1.5 2.5 H6 L7.5 4 H14 V7 H4 Z" fill="#c8cfa8" stroke="#222" stroke-width="1"/><path d="M1.5 13.5 L4 6.5 H17 L14.5 13.5Z" fill="#c8cfa8" stroke="#222" stroke-width="1"/><path d="M1.5 2.5 V13.5" stroke="#222"/></svg>
<div class="t" style="left:346.20px;top:703.96px;font-size:18px;letter-spacing:1.620px;color:#000">sys</div>
<div class="t" style="left:738.30px;top:704.06px;font-size:18px;letter-spacing:1.300px;color:#000">Yesterday</div>
<svg class="a" style="left:325px;top:736px" width="18" height="15" viewBox="0 0 18 15"><path d="M1.5 2.5 H6 L7.5 4 H14 V7 H4 Z" fill="#c8cfa8" stroke="#222" stroke-width="1"/><path d="M1.5 13.5 L4 6.5 H17 L14.5 13.5Z" fill="#c8cfa8" stroke="#222" stroke-width="1"/><path d="M1.5 2.5 V13.5" stroke="#222"/></svg>
<div class="t" style="left:346.20px;top:733.96px;font-size:18px;letter-spacing:1.800px;color:#000">tmp</div>
<div class="t" style="left:738.30px;top:734.06px;font-size:18px;letter-spacing:1.000px;color:#000">Today</div>
<div class="a" style="left:322px;top:758px;width:510px;height:30px;background:#ededeb"></div>
<svg class="a" style="left:325px;top:766px" width="18" height="15" viewBox="0 0 18 15"><path d="M1.5 2.5 H6 L7.5 4 H14 V7 H4 Z" fill="#c8cfa8" stroke="#222" stroke-width="1"/><path d="M1.5 13.5 L4 6.5 H17 L14.5 13.5Z" fill="#c8cfa8" stroke="#222" stroke-width="1"/><path d="M1.5 2.5 V13.5" stroke="#222"/></svg>
<div class="t" style="left:346.20px;top:763.96px;font-size:18px;letter-spacing:1.500px;color:#000">var</div>
<div class="t" style="left:738.30px;top:764.06px;font-size:18px;letter-spacing:1.300px;color:#000">Yesterday</div>
<div class="a btn" style="left:100px;top:807px;width:105px;height:34px"></div>
<svg class="a" style="left:125px;top:815px" width="16" height="16" viewBox="0 0 16 16"><path d="M6 1.5 H10 V6 H14.5 V10 H10 V14.5 H6 V10 H1.5 V6 H6Z" fill="#7a94c0" stroke="#334" stroke-width="1"/></svg>
<div class="t" style="left:145.60px;top:814.56px;font-size:18px;letter-spacing:0.900px"><span class="u">A</span>dd</div>
<div class="a btn" style="left:211px;top:807px;width:105px;height:34px"></div>
<svg class="a" style="left:217px;top:819px" width="16" height="8" viewBox="0 0 16 8"><rect x="1" y="1.5" width="14" height="5" rx="2.5" fill="#aab" stroke="#556" stroke-width="1"/></svg>
<div class="t" style="left:239.30px;top:814.56px;font-size:18px;letter-spacing:0.920px;color:#8a8a8a;text-shadow:1px 1px 0 #fff"><span class="u">R</span>emove</div>
<div class="a btn" style="left:713px;top:807px;width:121px;height:34px"></div>
<div class="t" style="left:720.00px;top:813.86px;font-size:18px;letter-spacing:1.044px">Mail Files</div>
<div class="a" style="left:813px;top:811px;width:1px;height:26px;background:#9d9a93;box-shadow:1px 0 0 #fff"></div>
<div class="a" style="left:817px;top:822px;width:0;height:0;border-left:5px solid transparent;border-right:5px solid transparent;border-top:5px solid #000"></div>
<div class="a btn" style="left:618px;top:866px;width:105px;height:33px"></div>
<svg class="a" style="left:629px;top:873px" width="16" height="18" viewBox="0 0 16 18"><path d="M3 15 L13 3 M4 4 Q8 9 12 15" stroke="#702020" stroke-width="3.5" stroke-linecap="round" fill="none"/><path d="M3 15 L13 3 M4 4 Q8 9 12 15" stroke="#d04a4a" stroke-width="2" stroke-linecap="round" fill="none"/></svg>
<div class="t" style="left:650.40px;top:872.26px;font-size:18px;letter-spacing:1.000px"><span class="u">C</span>ancel</div>
<div class="a" style="left:729px;top:866px;width:105px;height:33px;border:1px solid #000"></div>
<div class="a btn" style="left:730px;top:867px;width:103px;height:31px;border-bottom-width:2px;border-right-width:2px"></div>
<svg class="a" style="left:745px;top:874px" width="20" height="16" viewBox="0 0 20 16"><path d="M1.5 2.5 H7 L8.5 4 H15 V7 H4 Z" fill="#c8cfa8" stroke="#333" stroke-width="1"/><path d="M1.5 14.5 L4 6.5 H19 L16 14.5Z" fill="#c8cfa8" stroke="#333" stroke-width="1"/><path d="M1.5 2.5 V14.5" stroke="#333"/></svg>
<div class="t" style="left:768.60px;top:872.26px;font-size:18px;letter-spacing:1.000px"><span class="u">O</span>pen</div>
</body></html>
